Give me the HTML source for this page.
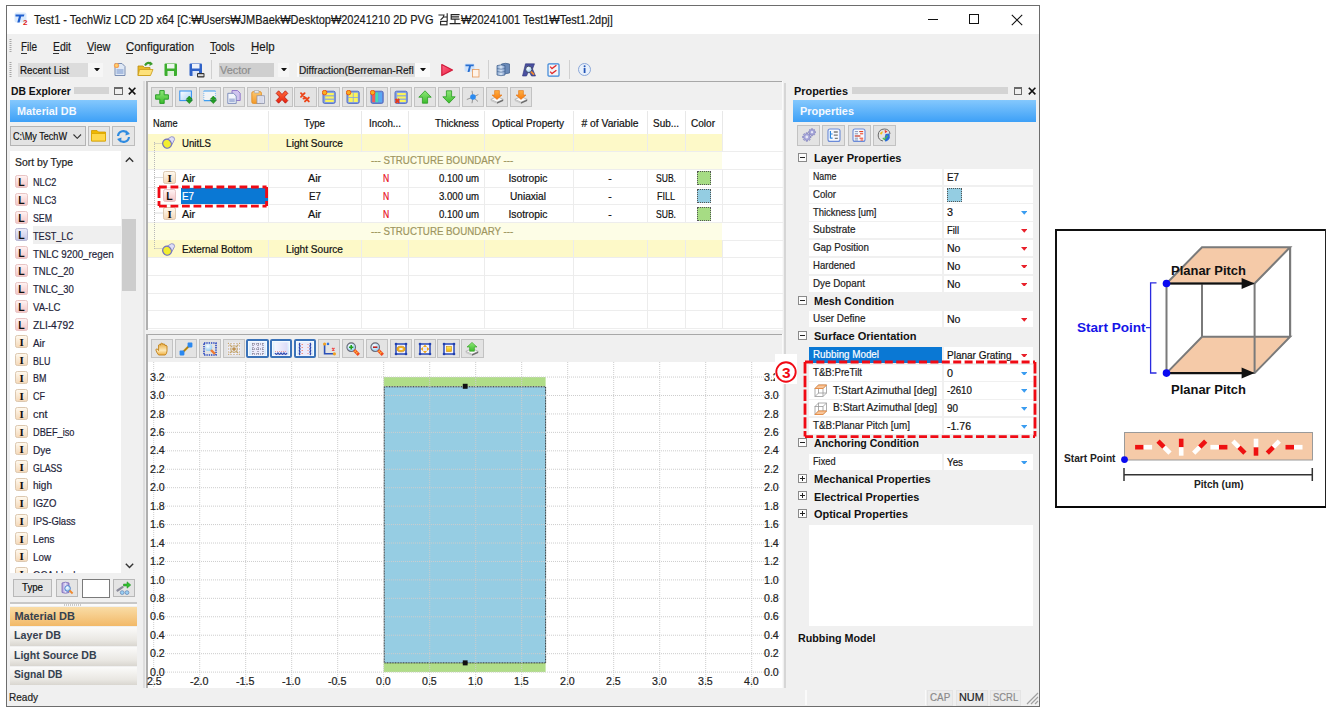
<!DOCTYPE html>
<html><head><meta charset="utf-8"><style>
html,body{margin:0;padding:0;width:1333px;height:711px;overflow:hidden;background:#fff;}
.a{position:absolute;display:block;}
.t{position:absolute;white-space:pre;line-height:1;transform-origin:0 0;}
.n{-webkit-text-stroke:0.2px currentColor;}

</style></head><body>
<svg width='0' height='0' style='position:absolute'><defs>
<linearGradient id='gL' x1='0' y1='0' x2='0' y2='1'><stop offset='0' stop-color='#fff4f4'/><stop offset='1' stop-color='#f4c4c4'/></linearGradient>
<linearGradient id='gLs' x1='0' y1='0' x2='0' y2='1'><stop offset='0' stop-color='#eeeefa'/><stop offset='1' stop-color='#c4c4e4'/></linearGradient>
<linearGradient id='gI' x1='0' y1='0' x2='0' y2='1'><stop offset='0' stop-color='#fffaf0'/><stop offset='1' stop-color='#f4d8b8'/></linearGradient>
<linearGradient id='gGreen' x1='0' y1='0' x2='0' y2='1'><stop offset='0' stop-color='#8ee878'/><stop offset='1' stop-color='#3cbc2c'/></linearGradient>
<linearGradient id='gBlueRect' x1='0' y1='0' x2='1' y2='1'><stop offset='0' stop-color='#ffffff'/><stop offset='1' stop-color='#a8d0f8'/></linearGradient>
<linearGradient id='gOrange' x1='0' y1='0' x2='0' y2='1'><stop offset='0' stop-color='#fcc870'/><stop offset='1' stop-color='#f49a2a'/></linearGradient>
<linearGradient id='gOrange2' x1='0' y1='0' x2='0' y2='1'><stop offset='0' stop-color='#ffb040'/><stop offset='1' stop-color='#f67a10'/></linearGradient>
<linearGradient id='gRed' x1='0' y1='0' x2='0' y2='1'><stop offset='0' stop-color='#ff6a3a'/><stop offset='1' stop-color='#e8200e'/></linearGradient>
<radialGradient id='gLens' cx='.4' cy='.35' r='.7'><stop offset='0' stop-color='#ffffff'/><stop offset='1' stop-color='#8cc8f0'/></radialGradient>
<linearGradient id='gHand' x1='0' y1='0' x2='0' y2='1'><stop offset='0' stop-color='#e8a838'/><stop offset='.6' stop-color='#fce8b8'/><stop offset='1' stop-color='#f0b040'/></linearGradient>
<linearGradient id='gLav' x1='0' y1='0' x2='1' y2='0'><stop offset='0' stop-color='#f6f6ff'/><stop offset='1' stop-color='#dcdcf8'/></linearGradient>
<linearGradient id='gYel' x1='0' y1='0' x2='0' y2='1'><stop offset='0' stop-color='#fff060'/><stop offset='1' stop-color='#f0b000'/></linearGradient>
<linearGradient id='gPlay' x1='0' y1='0' x2='1' y2='1'><stop offset='0' stop-color='#ff6a8a'/><stop offset='1' stop-color='#e81838'/></linearGradient>
<linearGradient id='gDB' x1='0' y1='0' x2='1' y2='0'><stop offset='0' stop-color='#8aa8d0'/><stop offset='.5' stop-color='#d8e6f6'/><stop offset='1' stop-color='#7a98c8'/></linearGradient>
<radialGradient id='gInfo' cx='.4' cy='.35' r='.7'><stop offset='0' stop-color='#ffffff'/><stop offset='1' stop-color='#dcdcf4'/></radialGradient>
<linearGradient id='gCyl' x1='0' y1='0' x2='1' y2='0'><stop offset='0' stop-color='#a898d8'/><stop offset='.5' stop-color='#e4e0f8'/><stop offset='1' stop-color='#9888c8'/></linearGradient>
</defs></svg>
<div class=a style="left:6px;top:5px;width:1034px;height:702px;background:#f0f0f0;box-sizing:border-box;border:1px solid #6d6d6d;"></div>
<div class=a style="left:7px;top:6px;width:1032px;height:28px;background:#ffffff;"></div>
<svg class=a style="left:14px;top:12px;" width=15 height=13 viewBox="0 0 15 13">
      <rect x='0.5' y='0.5' width='12' height='10' rx='2' fill='#cfe3fb' opacity='.8'/>
      <path d='M1.5 2.5 H10.5 L9.8 4.5 H7.2 L5.6 10.5 H3.3 L4.9 4.5 H1.5 Z' fill='#1f5fcf'/>
      <text x='9' y='12.8' font-family='Liberation Sans' font-weight='700' font-size='8' fill='#e02020'>2</text>
    </svg>
<span class='t n' style="left:33.60px;top:13.92px;font-family:'Liberation Sans',sans-serif;font-size:12.8px;font-weight:400;color:#1a1a1a;transform:scaleX(0.8579);">Test1 - TechWiz LCD 2D x64 [C:₩Users₩JMBaek₩Desktop₩20241210 2D PVG</span>
<svg class=a style="left:437px;top:12px;" width=26 height=14 viewBox="0 0 26 14">
      <g fill='none' stroke='#262626' stroke-width='1.15' stroke-linecap='square'>
       <path d='M2 3 H7 Q6.6 6 4 7.5'/>
       <path d='M10.2 1.8 V8.6 M6.8 5 H10.2'/>
       <rect x='3.6' y='9.4' width='6.4' height='3.4'/>
       <path d='M14.2 2.6 H22 M14.2 2.6 V7.1 H22 M14.2 4.9 H21.5 M18 7.1 V11 M13.2 11.6 H23'/>
      </g></svg>
<span class='t n' style="left:461.20px;top:13.92px;font-family:'Liberation Sans',sans-serif;font-size:12.8px;font-weight:400;color:#1a1a1a;transform:scaleX(0.8581);">₩20241001 Test1₩Test1.2dpj]</span>
<div class=a style="left:927.6px;top:19px;width:10.5px;height:1px;background:#111;"></div>
<div class=a style="left:969.4px;top:14.3px;width:10px;height:10px;box-sizing:border-box;border:1px solid #111;"></div>
<svg class=a style="left:1011px;top:13.5px;" width=12 height=12 viewBox="0 0 12 12"><path d='M0.8 0.8 L11.2 11.2 M11.2 0.8 L0.8 11.2' stroke='#111' stroke-width='1.1'/></svg>
<svg class=a style="left:9px;top:39px;" width=3 height=13 viewBox="0 0 3 13"><line x1='1.5' y1='0' x2='1.5' y2='13' stroke='#a8a8a8' stroke-width='2' stroke-dasharray='1 1'/></svg>
<span class='t n' style="left:21.00px;top:40.86px;font-family:'Liberation Sans',sans-serif;font-size:12.4px;font-weight:400;color:#1a1a1a;transform:scaleX(0.8013);">File</span>
<span class='t n' style="left:53.00px;top:40.86px;font-family:'Liberation Sans',sans-serif;font-size:12.4px;font-weight:400;color:#1a1a1a;transform:scaleX(0.8427);">Edit</span>
<span class='t n' style="left:86.60px;top:40.86px;font-family:'Liberation Sans',sans-serif;font-size:12.4px;font-weight:400;color:#1a1a1a;transform:scaleX(0.8784);">View</span>
<span class='t n' style="left:126.00px;top:40.86px;font-family:'Liberation Sans',sans-serif;font-size:12.4px;font-weight:400;color:#1a1a1a;transform:scaleX(0.9226);">Configuration</span>
<span class='t n' style="left:210.40px;top:40.86px;font-family:'Liberation Sans',sans-serif;font-size:12.4px;font-weight:400;color:#1a1a1a;transform:scaleX(0.8501);">Tools</span>
<span class='t n' style="left:251.00px;top:40.86px;font-family:'Liberation Sans',sans-serif;font-size:12.4px;font-weight:400;color:#1a1a1a;transform:scaleX(0.9261);">Help</span>
<div class=a style="left:21px;top:52.8px;width:6px;height:1px;background:#333;"></div>
<div class=a style="left:53px;top:52.8px;width:6px;height:1px;background:#333;"></div>
<div class=a style="left:86.6px;top:52.8px;width:7px;height:1px;background:#333;"></div>
<div class=a style="left:126px;top:52.8px;width:7px;height:1px;background:#333;"></div>
<div class=a style="left:210.4px;top:52.8px;width:6px;height:1px;background:#333;"></div>
<div class=a style="left:251px;top:52.8px;width:7px;height:1px;background:#333;"></div>
<svg class=a style="left:9px;top:62px;" width=3 height=15 viewBox="0 0 3 15"><line x1='1.5' y1='0' x2='1.5' y2='15' stroke='#a8a8a8' stroke-width='2' stroke-dasharray='1 1'/></svg>
<div class=a style="left:18px;top:62.6px;width:70px;height:14.4px;background:#dcdcdc;"></div>
<div class=a style="left:88px;top:62.6px;width:14.5px;height:14.4px;background:#f6f6f6;"></div>
<span class='t n' style="left:19.60px;top:64.85px;font-family:'Liberation Sans',sans-serif;font-size:11px;font-weight:400;color:#111;transform:scaleX(0.8904);">Recent List</span>
<svg class=a style="left:94.3px;top:67.75px;" width=6 height=3.5 viewBox="0 0 6 3.5"><path d='M0 0 H6 L3.0 3.5 Z' fill='#111'/></svg>
<svg class=a style="left:113px;top:62px;" width=14 height=15 viewBox="0 0 14 15">
      <path d='M2 1.5 H9 L12 4.5 V13.5 H2 Z' fill='#dfe8f5' stroke='#7b8fb3' stroke-width='1'/>
      <rect x='3.5' y='7' width='7' height='5' fill='#a9bde0'/>
      <circle cx='3.5' cy='3.5' r='2.6' fill='#f5a25a'/><circle cx='3.5' cy='3.5' r='1.4' fill='#ffd36b'/></svg>
<svg class=a style="left:137px;top:61px;" width=17 height=16 viewBox="0 0 17 16">
      <path d='M1 5 H6 L7.5 6.5 H13 V14.5 H1 Z' fill='#e9b928' stroke='#b98b10' stroke-width='.8'/>
      <path d='M2.5 8.5 H16 L13.5 14.5 H1 Z' fill='#fde17a' stroke='#c99a18' stroke-width='.8'/>
      <path d='M8 4.5 Q10 0.5 14 2.5' fill='none' stroke='#3a9b2a' stroke-width='2'/>
      <path d='M13 0.5 L16 3 L12.5 5 Z' fill='#3a9b2a'/></svg>
<svg class=a style="left:164px;top:62.5px;" width=14 height=14 viewBox="0 0 14 14">
      <rect x='0.5' y='0.5' width='12.5' height='12.5' fill='#3cae2e' rx='1'/>
      <rect x='3' y='1' width='7.5' height='4.5' fill='#eef6ee'/>
      <rect x='3.5' y='8' width='6.5' height='5' fill='#dff0dd'/></svg>
<svg class=a style="left:188.5px;top:62.5px;" width=16 height=15 viewBox="0 0 16 15">
      <rect x='0.5' y='0.5' width='12.5' height='12.5' fill='#2f62c8' rx='1'/>
      <rect x='3' y='1' width='7.5' height='4.5' fill='#eef2fa'/>
      <rect x='3.5' y='8' width='6.5' height='5' fill='#dde6f7'/>
      <rect x='8' y='10' width='7.5' height='4.5' fill='#333' rx='1'/><rect x='9' y='11.2' width='5.5' height='2' fill='#ddd'/></svg>
<div class=a style="left:211px;top:60px;width:1px;height:19px;background:#d0d0d0;"></div>
<div class=a style="left:218.8px;top:62.5px;width:55.5px;height:14.3px;background:#cfcfcf;"></div>
<span class='t n' style="left:220.00px;top:64.85px;font-family:'Liberation Sans',sans-serif;font-size:11px;font-weight:400;color:#8d8d8d;transform:scaleX(0.9940);">Vector</span>
<div class=a style="left:278.3px;top:62.5px;width:10.5px;height:14.3px;background:#f6f6f6;"></div>
<svg class=a style="left:280.5px;top:67.75px;" width=6 height=3.5 viewBox="0 0 6 3.5"><path d='M0 0 H6 L3.0 3.5 Z' fill='#111'/></svg>
<div class=a style="left:297px;top:62.5px;width:133px;height:14.5px;background:#fafafa;"></div>
<div class=a style="left:298.5px;top:63.3px;width:116.3px;height:13.5px;background:#dedede;"></div>
<span class='t n' style="left:299.30px;top:64.85px;font-family:'Liberation Sans',sans-serif;font-size:11px;font-weight:400;color:#1a1a1a;transform:scaleX(0.9212);">Diffraction(Berreman-Refl</span>
<svg class=a style="left:420.3px;top:67.75px;" width=6 height=3.5 viewBox="0 0 6 3.5"><path d='M0 0 H6 L3.0 3.5 Z' fill='#111'/></svg>
<svg class=a style="left:440px;top:62.5px;" width=14 height=14 viewBox="0 0 14 14"><path d='M1.8 1.5 L12.5 7 L1.8 12.5 Z' fill='url(#gPlay)' stroke='#d01838' stroke-width='1.2' stroke-linejoin='round'/></svg>
<svg class=a style="left:464px;top:62px;" width=16 height=16 viewBox="0 0 16 16">
      <rect x='0.5' y='1.5' width='10' height='8' rx='1.5' fill='#cde2fb'/>
      <path d='M1.5 2.5 H10 L9.5 4.3 H7 L5.5 10 H3.5 L5 4.3 H1.5 Z' fill='#2a6fd0'/>
      <rect x='8.5' y='7.5' width='6.5' height='7.5' fill='#fff3e8' stroke='#e59a5a' stroke-width='.8'/></svg>
<div class=a style="left:487.6px;top:60px;width:1px;height:19px;background:#d0d0d0;"></div>
<svg class=a style="left:495.5px;top:62px;" width=15 height=15 viewBox="0 0 15 15">
      <path d='M5.5 2 Q9.5 0.6 13.5 2 V11 Q9.5 12.4 5.5 11 Z' fill='#6a8ab8' stroke='#3a5a88' stroke-width='.7'/>
      <path d='M1 3.6 Q5 2.2 9 3.6 V13 Q5 14.4 1 13 Z' fill='url(#gDB)' stroke='#3a5a88' stroke-width='.7'/>
      <path d='M1 6.5 Q5 7.9 9 6.5 M1 9.5 Q5 10.9 9 9.5' fill='none' stroke='#4a6a98' stroke-width='.7'/></svg>
<svg class=a style="left:521.5px;top:62.5px;" width=14 height=14 viewBox="0 0 14 14">
      <path d='M0.5 13 L3.5 0.8 H12.5 L10.5 6 L13.5 13 H9.5 L6.8 8 L4.5 13 Z' fill='#4a50a0' stroke='#2a3078' stroke-width='.6'/>
      <circle cx='6.8' cy='6.3' r='3.2' fill='url(#gLens)' stroke='#3a3a58' stroke-width='.9'/>
      <path d='M9 8.6 L12 11.6' stroke='#f08a30' stroke-width='2'/></svg>
<svg class=a style="left:547px;top:62.5px;" width=13 height=14 viewBox="0 0 13 14">
      <rect x='1' y='0.8' width='11' height='12.4' rx='1' fill='#f4f4f8' stroke='#3a86d8' stroke-width='1.2'/>
      <path d='M3.2 3.6 L5 5.6 L9.4 2.2 M3.2 8.6 L5 10.6 L9.4 7.2' fill='none' stroke='#e02a2a' stroke-width='1.3'/></svg>
<div class=a style="left:569px;top:60px;width:1px;height:19px;background:#d0d0d0;"></div>
<svg class=a style="left:577px;top:62.5px;" width=15 height=14 viewBox="0 0 15 14">
      <circle cx='7.5' cy='6.5' r='6' fill='#e8f0fb' stroke='#8aa7d8' stroke-width='1'/>
      <rect x='6.7' y='5' width='1.8' height='5' fill='#2456b8'/><circle cx='7.6' cy='3.2' r='1' fill='#2456b8'/></svg>
<span class='t' style="left:10.60px;top:85.65px;font-family:'Liberation Sans',sans-serif;font-size:11px;font-weight:700;color:#111;transform:scaleX(0.9406);">DB Explorer</span>
<div class=a style="left:74px;top:87px;width:34.5px;height:6.6px;background:#d4d4d4;"></div>
<div class=a style="left:114px;top:86.5px;width:8.8px;height:8.2px;box-sizing:border-box;border:1px solid #6a6a6a;"></div>
<div class=a style="left:115px;top:87.5px;width:6.8px;height:1px;background:#6a6a6a;"></div>
<svg class=a style="left:128px;top:86.5px;" width=8.2 height=8.2 viewBox="0 0 8.2 8.2"><path d='M0.8 0.8 L7.4 7.4 M7.4 0.8 L0.8 7.4' stroke='#111' stroke-width='1.6'/></svg>
<div class=a style="left:10px;top:100.3px;width:127px;height:21.5px;background:linear-gradient(#84c8fd,#3da0f7);"></div>
<span class='t' style="left:16.50px;top:106.05px;font-family:'Liberation Sans',sans-serif;font-size:11px;font-weight:700;color:#f4f9ff;transform:scaleX(0.9830);">Material DB</span>
<div class=a style="left:10px;top:126px;width:75.5px;height:20px;background:#e3e3e3;box-sizing:border-box;border:1px solid #b4b4b4;"></div>
<span class='t n' style="left:13.30px;top:130.85px;font-family:'Liberation Sans',sans-serif;font-size:11px;font-weight:400;color:#111;transform:scaleX(0.8282);">C:\My TechW</span>
<svg class=a style="left:73px;top:134px;" width=8.5 height=5 viewBox="0 0 8.5 5"><path d='M0.5 0.5 L4.25 4.3 L8 0.5' fill='none' stroke='#333' stroke-width='1.1'/></svg>
<div class=a style="left:87.5px;top:126px;width:22.2px;height:20px;background:#e6e6e6;box-sizing:border-box;border:1px solid #bdbdbd;"></div>
<svg class=a style="left:90.5px;top:129px;" width=16 height=13 viewBox="0 0 16 13">
      <path d='M0.5 1.5 H6 L7.5 3 H14.5 V12 H0.5 Z' fill='#f0b800' stroke='#d09a00' stroke-width='.8'/>
      <path d='M0.5 4.5 H14.5 V12 H0.5 Z' fill='#ffd84a' stroke='#d8a400' stroke-width='.8'/></svg>
<div class=a style="left:112.3px;top:126px;width:22.5px;height:20px;background:#e6e6e6;box-sizing:border-box;border:1px solid #bdbdbd;"></div>
<svg class=a style="left:116px;top:128.5px;" width=15 height=15 viewBox="0 0 15 15">
      <path d='M2 7 A5.5 5.5 0 0 1 12 4.5' fill='none' stroke='#2f8be0' stroke-width='2.2'/>
      <path d='M13 8 A5.5 5.5 0 0 1 3 10.5' fill='none' stroke='#2f8be0' stroke-width='2.2'/>
      <path d='M10 1.5 L14 5 L9.5 6.5 Z' fill='#2f8be0'/><path d='M5 13.5 L1 10 L5.5 8.5 Z' fill='#2f8be0'/></svg>
<div class=a style="left:10px;top:151px;width:111px;height:422px;background:#ffffff;"></div>
<div class=a style="left:121px;top:151px;width:16px;height:422px;background:#f0f0f0;"></div>
<div class=a style="left:122px;top:219px;width:14px;height:72px;background:#cdcdcd;"></div>
<svg class=a style="left:124.5px;top:157.2px;" width=9 height=5.5 viewBox="0 0 9 5.5"><path d='M0.8 4.8 L4.5 1 L8.2 4.8' fill='none' stroke='#333' stroke-width='1.4'/></svg>
<svg class=a style="left:124.5px;top:563.2px;" width=9 height=5.5 viewBox="0 0 9 5.5"><path d='M0.8 0.8 L4.5 4.6 L8.2 0.8' fill='none' stroke='#333' stroke-width='1.4'/></svg>
<span class='t n' style="left:14.60px;top:157.19px;font-family:'Liberation Sans',sans-serif;font-size:10.6px;font-weight:400;color:#222;transform:scaleX(0.9784);">Sort by Type</span>
<svg class=a style="left:15.2px;top:175.0px;" width=13 height=13 viewBox="0 0 13 13"><rect x='0.5' y='0.5' width='12' height='12' rx='1.8' fill='url(#gL)' stroke='#e8c4c4' stroke-width='1'/><text x='6.5' y='10.5' text-anchor='middle' font-family='Liberation Sans' font-weight='700' font-size='10.5' fill='#111'>L</text></svg>
<span class='t n' style="left:33.20px;top:177.29px;font-family:'Liberation Sans',sans-serif;font-size:10.6px;font-weight:400;color:#1f1f3a;transform:scaleX(0.8600);">NLC2</span>
<svg class=a style="left:15.2px;top:192.82999999999998px;" width=13 height=13 viewBox="0 0 13 13"><rect x='0.5' y='0.5' width='12' height='12' rx='1.8' fill='url(#gL)' stroke='#e8c4c4' stroke-width='1'/><text x='6.5' y='10.5' text-anchor='middle' font-family='Liberation Sans' font-weight='700' font-size='10.5' fill='#111'>L</text></svg>
<span class='t n' style="left:33.20px;top:195.12px;font-family:'Liberation Sans',sans-serif;font-size:10.6px;font-weight:400;color:#1f1f3a;transform:scaleX(0.8600);">NLC3</span>
<svg class=a style="left:15.2px;top:210.66px;" width=13 height=13 viewBox="0 0 13 13"><rect x='0.5' y='0.5' width='12' height='12' rx='1.8' fill='url(#gL)' stroke='#e8c4c4' stroke-width='1'/><text x='6.5' y='10.5' text-anchor='middle' font-family='Liberation Sans' font-weight='700' font-size='10.5' fill='#111'>L</text></svg>
<span class='t n' style="left:33.20px;top:212.95px;font-family:'Liberation Sans',sans-serif;font-size:10.6px;font-weight:400;color:#1f1f3a;transform:scaleX(0.8272);">SEM</span>
<div class=a style="left:32.7px;top:226.39000000000001px;width:88px;height:17.4px;background:#efefef;"></div>
<svg class=a style="left:15.2px;top:228.49px;" width=13 height=13 viewBox="0 0 13 13"><rect x='0.5' y='0.5' width='12' height='12' rx='1.8' fill='url(#gLs)' stroke='#b8b8d4' stroke-width='1'/><text x='6.5' y='10.5' text-anchor='middle' font-family='Liberation Sans' font-weight='700' font-size='10.5' fill='#111'>L</text></svg>
<span class='t n' style="left:33.20px;top:230.78px;font-family:'Liberation Sans',sans-serif;font-size:10.6px;font-weight:400;color:#1f1f3a;transform:scaleX(0.8599);">TEST_LC</span>
<svg class=a style="left:15.2px;top:246.32px;" width=13 height=13 viewBox="0 0 13 13"><rect x='0.5' y='0.5' width='12' height='12' rx='1.8' fill='url(#gL)' stroke='#e8c4c4' stroke-width='1'/><text x='6.5' y='10.5' text-anchor='middle' font-family='Liberation Sans' font-weight='700' font-size='10.5' fill='#111'>L</text></svg>
<span class='t n' style="left:33.20px;top:248.61px;font-family:'Liberation Sans',sans-serif;font-size:10.6px;font-weight:400;color:#1f1f3a;transform:scaleX(0.9246);">TNLC 9200_regen</span>
<svg class=a style="left:15.2px;top:264.15px;" width=13 height=13 viewBox="0 0 13 13"><rect x='0.5' y='0.5' width='12' height='12' rx='1.8' fill='url(#gL)' stroke='#e8c4c4' stroke-width='1'/><text x='6.5' y='10.5' text-anchor='middle' font-family='Liberation Sans' font-weight='700' font-size='10.5' fill='#111'>L</text></svg>
<span class='t n' style="left:33.20px;top:266.44px;font-family:'Liberation Sans',sans-serif;font-size:10.6px;font-weight:400;color:#1f1f3a;transform:scaleX(0.8998);">TNLC_20</span>
<svg class=a style="left:15.2px;top:281.98px;" width=13 height=13 viewBox="0 0 13 13"><rect x='0.5' y='0.5' width='12' height='12' rx='1.8' fill='url(#gL)' stroke='#e8c4c4' stroke-width='1'/><text x='6.5' y='10.5' text-anchor='middle' font-family='Liberation Sans' font-weight='700' font-size='10.5' fill='#111'>L</text></svg>
<span class='t n' style="left:33.20px;top:284.27px;font-family:'Liberation Sans',sans-serif;font-size:10.6px;font-weight:400;color:#1f1f3a;transform:scaleX(0.8998);">TNLC_30</span>
<svg class=a style="left:15.2px;top:299.81px;" width=13 height=13 viewBox="0 0 13 13"><rect x='0.5' y='0.5' width='12' height='12' rx='1.8' fill='url(#gL)' stroke='#e8c4c4' stroke-width='1'/><text x='6.5' y='10.5' text-anchor='middle' font-family='Liberation Sans' font-weight='700' font-size='10.5' fill='#111'>L</text></svg>
<span class='t n' style="left:33.20px;top:302.10px;font-family:'Liberation Sans',sans-serif;font-size:10.6px;font-weight:400;color:#1f1f3a;transform:scaleX(0.9040);">VA-LC</span>
<svg class=a style="left:15.2px;top:317.64px;" width=13 height=13 viewBox="0 0 13 13"><rect x='0.5' y='0.5' width='12' height='12' rx='1.8' fill='url(#gL)' stroke='#e8c4c4' stroke-width='1'/><text x='6.5' y='10.5' text-anchor='middle' font-family='Liberation Sans' font-weight='700' font-size='10.5' fill='#111'>L</text></svg>
<span class='t n' style="left:33.20px;top:319.93px;font-family:'Liberation Sans',sans-serif;font-size:10.6px;font-weight:400;color:#1f1f3a;transform:scaleX(0.9621);">ZLI-4792</span>
<svg class=a style="left:15.2px;top:335.46999999999997px;" width=13 height=13 viewBox="0 0 13 13"><rect x='0.5' y='0.5' width='12' height='12' rx='1.8' fill='url(#gI)' stroke='#dcc8b0' stroke-width='1'/><text x='6.6' y='10.8' text-anchor='middle' font-family='Liberation Serif' font-weight='700' font-size='11' fill='#111'>I</text></svg>
<span class='t n' style="left:33.20px;top:337.76px;font-family:'Liberation Sans',sans-serif;font-size:10.6px;font-weight:400;color:#1f1f3a;transform:scaleX(0.9264);">Air</span>
<svg class=a style="left:15.2px;top:353.29999999999995px;" width=13 height=13 viewBox="0 0 13 13"><rect x='0.5' y='0.5' width='12' height='12' rx='1.8' fill='url(#gI)' stroke='#dcc8b0' stroke-width='1'/><text x='6.6' y='10.8' text-anchor='middle' font-family='Liberation Serif' font-weight='700' font-size='11' fill='#111'>I</text></svg>
<span class='t n' style="left:33.20px;top:355.59px;font-family:'Liberation Sans',sans-serif;font-size:10.6px;font-weight:400;color:#1f1f3a;transform:scaleX(0.8394);">BLU</span>
<svg class=a style="left:15.2px;top:371.13px;" width=13 height=13 viewBox="0 0 13 13"><rect x='0.5' y='0.5' width='12' height='12' rx='1.8' fill='url(#gI)' stroke='#dcc8b0' stroke-width='1'/><text x='6.6' y='10.8' text-anchor='middle' font-family='Liberation Serif' font-weight='700' font-size='11' fill='#111'>I</text></svg>
<span class='t n' style="left:33.20px;top:373.42px;font-family:'Liberation Sans',sans-serif;font-size:10.6px;font-weight:400;color:#1f1f3a;transform:scaleX(0.8433);">BM</span>
<svg class=a style="left:15.2px;top:388.96px;" width=13 height=13 viewBox="0 0 13 13"><rect x='0.5' y='0.5' width='12' height='12' rx='1.8' fill='url(#gI)' stroke='#dcc8b0' stroke-width='1'/><text x='6.6' y='10.8' text-anchor='middle' font-family='Liberation Serif' font-weight='700' font-size='11' fill='#111'>I</text></svg>
<span class='t n' style="left:33.20px;top:391.25px;font-family:'Liberation Sans',sans-serif;font-size:10.6px;font-weight:400;color:#1f1f3a;transform:scaleX(0.8496);">CF</span>
<svg class=a style="left:15.2px;top:406.78999999999996px;" width=13 height=13 viewBox="0 0 13 13"><rect x='0.5' y='0.5' width='12' height='12' rx='1.8' fill='url(#gI)' stroke='#dcc8b0' stroke-width='1'/><text x='6.6' y='10.8' text-anchor='middle' font-family='Liberation Serif' font-weight='700' font-size='11' fill='#111'>I</text></svg>
<span class='t n' style="left:33.20px;top:409.08px;font-family:'Liberation Sans',sans-serif;font-size:10.6px;font-weight:400;color:#1f1f3a;transform:scaleX(1.0254);">cnt</span>
<svg class=a style="left:15.2px;top:424.62px;" width=13 height=13 viewBox="0 0 13 13"><rect x='0.5' y='0.5' width='12' height='12' rx='1.8' fill='url(#gI)' stroke='#dcc8b0' stroke-width='1'/><text x='6.6' y='10.8' text-anchor='middle' font-family='Liberation Serif' font-weight='700' font-size='11' fill='#111'>I</text></svg>
<span class='t n' style="left:33.20px;top:426.91px;font-family:'Liberation Sans',sans-serif;font-size:10.6px;font-weight:400;color:#1f1f3a;transform:scaleX(0.8702);">DBEF_iso</span>
<svg class=a style="left:15.2px;top:442.45px;" width=13 height=13 viewBox="0 0 13 13"><rect x='0.5' y='0.5' width='12' height='12' rx='1.8' fill='url(#gI)' stroke='#dcc8b0' stroke-width='1'/><text x='6.6' y='10.8' text-anchor='middle' font-family='Liberation Serif' font-weight='700' font-size='11' fill='#111'>I</text></svg>
<span class='t n' style="left:33.20px;top:444.74px;font-family:'Liberation Sans',sans-serif;font-size:10.6px;font-weight:400;color:#1f1f3a;transform:scaleX(0.9552);">Dye</span>
<svg class=a style="left:15.2px;top:460.28px;" width=13 height=13 viewBox="0 0 13 13"><rect x='0.5' y='0.5' width='12' height='12' rx='1.8' fill='url(#gI)' stroke='#dcc8b0' stroke-width='1'/><text x='6.6' y='10.8' text-anchor='middle' font-family='Liberation Serif' font-weight='700' font-size='11' fill='#111'>I</text></svg>
<span class='t n' style="left:33.20px;top:462.57px;font-family:'Liberation Sans',sans-serif;font-size:10.6px;font-weight:400;color:#1f1f3a;transform:scaleX(0.8262);">GLASS</span>
<svg class=a style="left:15.2px;top:478.10999999999996px;" width=13 height=13 viewBox="0 0 13 13"><rect x='0.5' y='0.5' width='12' height='12' rx='1.8' fill='url(#gI)' stroke='#dcc8b0' stroke-width='1'/><text x='6.6' y='10.8' text-anchor='middle' font-family='Liberation Serif' font-weight='700' font-size='11' fill='#111'>I</text></svg>
<span class='t n' style="left:33.20px;top:480.40px;font-family:'Liberation Sans',sans-serif;font-size:10.6px;font-weight:400;color:#1f1f3a;transform:scaleX(0.9485);">high</span>
<svg class=a style="left:15.2px;top:495.93999999999994px;" width=13 height=13 viewBox="0 0 13 13"><rect x='0.5' y='0.5' width='12' height='12' rx='1.8' fill='url(#gI)' stroke='#dcc8b0' stroke-width='1'/><text x='6.6' y='10.8' text-anchor='middle' font-family='Liberation Serif' font-weight='700' font-size='11' fill='#111'>I</text></svg>
<span class='t n' style="left:33.20px;top:498.23px;font-family:'Liberation Sans',sans-serif;font-size:10.6px;font-weight:400;color:#1f1f3a;transform:scaleX(0.8994);">IGZO</span>
<svg class=a style="left:15.2px;top:513.77px;" width=13 height=13 viewBox="0 0 13 13"><rect x='0.5' y='0.5' width='12' height='12' rx='1.8' fill='url(#gI)' stroke='#dcc8b0' stroke-width='1'/><text x='6.6' y='10.8' text-anchor='middle' font-family='Liberation Serif' font-weight='700' font-size='11' fill='#111'>I</text></svg>
<span class='t n' style="left:33.20px;top:516.06px;font-family:'Liberation Sans',sans-serif;font-size:10.6px;font-weight:400;color:#1f1f3a;transform:scaleX(0.8933);">IPS-Glass</span>
<svg class=a style="left:15.2px;top:531.5999999999999px;" width=13 height=13 viewBox="0 0 13 13"><rect x='0.5' y='0.5' width='12' height='12' rx='1.8' fill='url(#gI)' stroke='#dcc8b0' stroke-width='1'/><text x='6.6' y='10.8' text-anchor='middle' font-family='Liberation Serif' font-weight='700' font-size='11' fill='#111'>I</text></svg>
<span class='t n' style="left:33.20px;top:533.89px;font-family:'Liberation Sans',sans-serif;font-size:10.6px;font-weight:400;color:#1f1f3a;transform:scaleX(0.9354);">Lens</span>
<svg class=a style="left:15.2px;top:549.43px;" width=13 height=13 viewBox="0 0 13 13"><rect x='0.5' y='0.5' width='12' height='12' rx='1.8' fill='url(#gI)' stroke='#dcc8b0' stroke-width='1'/><text x='6.6' y='10.8' text-anchor='middle' font-family='Liberation Serif' font-weight='700' font-size='11' fill='#111'>I</text></svg>
<span class='t n' style="left:33.20px;top:551.72px;font-family:'Liberation Sans',sans-serif;font-size:10.6px;font-weight:400;color:#1f1f3a;transform:scaleX(0.9260);">Low</span>
<svg class=a style="left:15.2px;top:567.26px;" width=13 height=13 viewBox="0 0 13 13"><rect x='0.5' y='0.5' width='12' height='12' rx='1.8' fill='url(#gI)' stroke='#dcc8b0' stroke-width='1'/><text x='6.6' y='10.8' text-anchor='middle' font-family='Liberation Serif' font-weight='700' font-size='11' fill='#111'>I</text></svg>
<span class='t n' style="left:33.20px;top:569.55px;font-family:'Liberation Sans',sans-serif;font-size:10.6px;font-weight:400;color:#1f1f3a;transform:scaleX(0.8992);">OCA black</span>
<div class=a style="left:7px;top:573px;width:139px;height:30px;background:#f0f0f0;"></div>
<div class=a style="left:12.5px;top:579px;width:39.5px;height:17.5px;background:#e4e4e4;box-sizing:border-box;border:1px solid #b8b8b8;"></div>
<span class='t n' style="left:21.70px;top:582.49px;font-family:'Liberation Sans',sans-serif;font-size:10.6px;font-weight:400;color:#111;transform:scaleX(0.9143);">Type</span>
<div class=a style="left:55.6px;top:579px;width:22.2px;height:17.5px;background:#e4e4e4;box-sizing:border-box;border:1px solid #b8b8b8;"></div>
<svg class=a style="left:59.5px;top:581px;" width=14 height=14 viewBox="0 0 14 14">
      <path d='M2 2 Q5.5 0.4 9 2 V11.5 Q5.5 13 2 11.5 Z' fill='url(#gCyl)' stroke='#7a6ab8' stroke-width='.8'/>
      <circle cx='7.6' cy='7.4' r='2.8' fill='url(#gLens)' stroke='#4a78c8' stroke-width='.9'/><path d='M9.6 9.6 L12.6 12.4' stroke='#f08a30' stroke-width='2'/></svg>
<div class=a style="left:82px;top:578.5px;width:28.4px;height:19.5px;background:#ffffff;box-sizing:border-box;border:1px solid #7a7a7a;"></div>
<div class=a style="left:112.7px;top:579px;width:22.3px;height:17.5px;background:#e4e4e4;box-sizing:border-box;border:1px solid #b8b8b8;"></div>
<svg class=a style="left:116px;top:580.5px;" width=16 height=15 viewBox="0 0 16 15">
      <path d='M1.5 9.5 L6.5 6.2' stroke='#8a8a9a' stroke-width='2.2' stroke-linecap='round'/>
      <circle cx='6.2' cy='11.6' r='1.9' fill='#9ad0f4' stroke='#6a8ab8' stroke-width='.8'/><circle cx='11' cy='11.6' r='1.9' fill='#9ad0f4' stroke='#6a8ab8' stroke-width='.8'/>
      <path d='M7.5 3 H11 V0.8 L14.8 4 L11 7.2 V5 H7.5 Z' fill='#30c030' stroke='#208a20' stroke-width='.5'/></svg>
<div class=a style="left:10px;top:602px;width:127px;height:1.6px;background:#c8c8c8;"></div>
<div class=a style="left:10px;top:603.8px;width:127px;height:2.6px;background:#fbfbfb;"></div>
<svg class=a style="left:64px;top:604.1px;" width=18 height=2 viewBox="0 0 18 2"><line x1='0' y1='1' x2='18' y2='1' stroke='#9a9a9a' stroke-width='1.2' stroke-dasharray='1 1'/></svg>
<div class=a style="left:9.7px;top:607px;width:127.3px;height:19.2px;background:linear-gradient(#f9dca6,#f2b968);"></div>
<div class=a style="left:9.7px;top:627.3px;width:127.3px;height:19.200000000000045px;background:linear-gradient(#fbfbfa,#e9e7e2 70%,#d9d6d0);"></div>
<div class=a style="left:9.7px;top:647.3px;width:127.3px;height:18.300000000000068px;background:linear-gradient(#fbfbfa,#e9e7e2 70%,#d9d6d0);"></div>
<div class=a style="left:9.7px;top:667px;width:127.3px;height:18px;background:linear-gradient(#fbfbfa,#e9e7e2 70%,#d9d6d0);"></div>
<span class='t' style="left:14.40px;top:610.85px;font-family:'Liberation Sans',sans-serif;font-size:11px;font-weight:700;color:#35414f;">Material DB</span>
<span class='t' style="left:14.40px;top:630.35px;font-family:'Liberation Sans',sans-serif;font-size:11px;font-weight:700;color:#35414f;transform:scaleX(0.9731);">Layer DB</span>
<span class='t' style="left:14.40px;top:649.75px;font-family:'Liberation Sans',sans-serif;font-size:11px;font-weight:700;color:#35414f;transform:scaleX(0.9574);">Light Source DB</span>
<span class='t' style="left:14.40px;top:669.25px;font-family:'Liberation Sans',sans-serif;font-size:11px;font-weight:700;color:#35414f;transform:scaleX(0.9335);">Signal DB</span>
<div class=a style="left:142.5px;top:81px;width:2px;height:607px;background:#dedede;"></div>
<div class=a style="left:146px;top:81px;width:637px;height:249px;background:#ffffff;"></div>
<div class=a style="left:146px;top:81px;width:637px;height:1.3px;background:#a8a8a8;"></div>
<div class=a style="left:146px;top:81px;width:1.6px;height:249px;background:#b0b0b0;"></div>
<div class=a style="left:147.8px;top:82.3px;width:635px;height:28px;background:#f0f0f0;"></div>
<div class=a style="left:781.5px;top:81px;width:1.8px;height:249px;background:#fafafa;"></div>
<div class=a style="left:150.8px;top:87.3px;width:22.2px;height:19.5px;background:#e3e3e3;box-sizing:border-box;border:1px solid #c2c2c2;"></div>
<svg class=a style="left:154.9px;top:90.05px;" width=14 height=14 viewBox="0 0 14 14"><path d='M4.8 0.6 H9.2 V4.8 H13.4 V9.2 H9.2 V13.4 H4.8 V9.2 H0.6 V4.8 H4.8 Z' fill='url(#gGreen)' stroke='#1f961f' stroke-width='.9'/></svg>
<div class=a style="left:174.73000000000002px;top:87.3px;width:22.2px;height:19.5px;background:#e3e3e3;box-sizing:border-box;border:1px solid #c2c2c2;"></div>
<svg class=a style="left:178.83px;top:90.05px;" width=14 height=14 viewBox="0 0 14 14"><rect x='0.8' y='1' width='11.6' height='9.6' fill='url(#gBlueRect)' stroke='#2f8ef0' stroke-width='1'/><path d='M10.3 6 L13.4 9.3 H11.3 V10.3 H13.4 L10.3 13.6 L7.2 10.3 H9.3 V9.3 H7.2 Z' fill='#22a022' stroke='#107010' stroke-width='.5'/></svg>
<div class=a style="left:198.66000000000003px;top:87.3px;width:22.2px;height:19.5px;background:#e3e3e3;box-sizing:border-box;border:1px solid #c2c2c2;"></div>
<svg class=a style="left:202.76000000000002px;top:90.05px;" width=14 height=14 viewBox="0 0 14 14"><rect x='0.8' y='1' width='11.6' height='9.6' fill='#f2f4f6'/><path d='M0.8 1 H12.4 M0.8 10.6 H12.4' stroke='#3f9ef0' stroke-width='1.1'/><path d='M0.8 1 V10.6 M12.4 1 V10.6' stroke='#7fbef5' stroke-width='1' stroke-dasharray='1 1'/><path d='M10.3 6 L13.4 9.3 H11.3 V10.3 H13.4 L10.3 13.6 L7.2 10.3 H9.3 V9.3 H7.2 Z' fill='#22a022' stroke='#107010' stroke-width='.5'/></svg>
<div class=a style="left:222.59px;top:87.3px;width:22.2px;height:19.5px;background:#e3e3e3;box-sizing:border-box;border:1px solid #c2c2c2;"></div>
<svg class=a style="left:226.69px;top:90.05px;" width=14 height=14 viewBox="0 0 14 14"><path d='M5 0.5 H10.5 L13.2 3.2 V10.5 H5 Z' fill='#cfc4ee' stroke='#8c72c8' stroke-width='.9'/><path d='M0.8 3.3 H6.5 L9.2 6 V13.4 H0.8 Z' fill='#f2f5fb' stroke='#7486b8' stroke-width='.9'/><rect x='2.2' y='8.5' width='5.6' height='3.6' fill='#aab8dc'/></svg>
<div class=a style="left:246.52px;top:87.3px;width:22.2px;height:19.5px;background:#e3e3e3;box-sizing:border-box;border:1px solid #c2c2c2;"></div>
<svg class=a style="left:250.62px;top:90.05px;" width=14 height=14 viewBox="0 0 14 14"><rect x='0.8' y='1.6' width='9.6' height='11.8' rx='1.5' fill='url(#gOrange)' stroke='#e08a20' stroke-width='.8'/><rect x='3.3' y='0.4' width='4.6' height='2.6' rx='.6' fill='#e8e8e8' stroke='#9a9a9a' stroke-width='.6'/><rect x='6' y='5.8' width='7.3' height='7.6' fill='#eceef8' stroke='#8a90a8' stroke-width='.8'/><path d='M7.5 8 H12 M7.5 10 H12 M7.5 12 H12' stroke='#b4b8d4' stroke-width='.7'/></svg>
<div class=a style="left:270.45000000000005px;top:87.3px;width:22.2px;height:19.5px;background:#e3e3e3;box-sizing:border-box;border:1px solid #c2c2c2;"></div>
<svg class=a style="left:274.55000000000007px;top:90.05px;" width=14 height=14 viewBox="0 0 14 14"><path d='M1.2 3.4 L3.6 0.8 L7 4.4 L10.4 0.8 L12.8 3.4 L9.4 7 L12.8 10.6 L10.4 13.2 L7 9.6 L3.6 13.2 L1.2 10.6 L4.6 7 Z' fill='url(#gRed)' stroke='#b8140c' stroke-width='.8'/></svg>
<div class=a style="left:294.38px;top:87.3px;width:22.2px;height:19.5px;background:#e3e3e3;box-sizing:border-box;border:1px solid #c2c2c2;"></div>
<svg class=a style="left:298.48px;top:90.05px;" width=14 height=14 viewBox="0 0 14 14"><path d='M3 3.2 L6.6 6.8 M6.6 3.2 L3 6.8 M7 7.6 L10.8 11.4 M10.8 7.6 L7 11.4 M5.5 8.5 L8 8' stroke='#ec4418' stroke-width='1.9' stroke-linecap='round'/></svg>
<div class=a style="left:318.31px;top:87.3px;width:22.2px;height:19.5px;background:#e3e3e3;box-sizing:border-box;border:1px solid #c2c2c2;"></div>
<svg class=a style="left:322.41px;top:90.05px;" width=14 height=14 viewBox="0 0 14 14"><rect x='1' y='1.2' width='12.2' height='12.2' rx='1.6' fill='#8aa4e0' stroke='#4a66c0' stroke-width='.9'/><rect x='3.2' y='3' width='8.6' height='2.2' fill='#fbf45a'/><rect x='3.2' y='6.4' width='8.6' height='2.2' fill='#fbf45a'/><rect x='3.2' y='9.8' width='8.6' height='2.2' fill='#fbf45a'/><circle cx='2.6' cy='2.6' r='2.3' fill='#f7b020' stroke='#ee5010' stroke-width='.9'/></svg>
<div class=a style="left:342.24px;top:87.3px;width:22.2px;height:19.5px;background:#e3e3e3;box-sizing:border-box;border:1px solid #c2c2c2;"></div>
<svg class=a style="left:346.34000000000003px;top:90.05px;" width=14 height=14 viewBox="0 0 14 14"><rect x='1' y='1.2' width='12.2' height='12.2' rx='1.6' fill='#8aa4e0' stroke='#4a66c0' stroke-width='.9'/><rect x='2.6' y='2.8' width='4.2' height='4.2' fill='#fbf45a'/><rect x='7.6' y='2.8' width='4.2' height='4.2' fill='#fbf45a'/><rect x='2.6' y='7.8' width='4.2' height='4.2' fill='#fbf45a'/><rect x='7.6' y='7.8' width='4.2' height='4.2' fill='#fbf45a'/><circle cx='2.6' cy='2.6' r='2.3' fill='#f7b020' stroke='#ee5010' stroke-width='.9'/></svg>
<div class=a style="left:366.17px;top:87.3px;width:22.2px;height:19.5px;background:#e3e3e3;box-sizing:border-box;border:1px solid #c2c2c2;"></div>
<svg class=a style="left:370.27000000000004px;top:90.05px;" width=14 height=14 viewBox="0 0 14 14"><rect x='1' y='1.2' width='12.2' height='12.2' rx='1.6' fill='#6a8ad8' stroke='#4a66c0' stroke-width='.9'/><rect x='2.2' y='2.4' width='3' height='9.8' fill='#f25a5a'/><rect x='5.4' y='2.4' width='3' height='9.8' fill='#44dcb4'/><rect x='8.6' y='2.4' width='3.4' height='9.8' fill='#58a8f4'/><circle cx='2.6' cy='2.6' r='2.3' fill='#f7b020' stroke='#ee5010' stroke-width='.9'/></svg>
<div class=a style="left:390.1px;top:87.3px;width:22.2px;height:19.5px;background:#e3e3e3;box-sizing:border-box;border:1px solid #c2c2c2;"></div>
<svg class=a style="left:394.20000000000005px;top:90.05px;" width=14 height=14 viewBox="0 0 14 14"><rect x='1' y='1.2' width='12.2' height='12.2' rx='1.6' fill='#8aa4e0' stroke='#4a66c0' stroke-width='.9'/><rect x='3.2' y='3' width='8.6' height='2.2' fill='#fbf45a'/><rect x='3.2' y='6.4' width='8.6' height='2.2' fill='#fbf45a'/><rect x='6' y='9.8' width='5.8' height='2.2' fill='#fbf45a'/><path d='M1.5 9 L5.2 12.8 M5.2 9 L1.5 12.8' stroke='#e83a18' stroke-width='1.9'/></svg>
<div class=a style="left:414.03000000000003px;top:87.3px;width:22.2px;height:19.5px;background:#e3e3e3;box-sizing:border-box;border:1px solid #c2c2c2;"></div>
<svg class=a style="left:418.13000000000005px;top:90.05px;" width=14 height=14 viewBox="0 0 14 14"><path d='M7 0.8 L13.2 7.2 H9.6 V13.2 H4.4 V7.2 H0.8 Z' fill='url(#gGreen)' stroke='#2a9a22' stroke-width='.8'/></svg>
<div class=a style="left:437.96px;top:87.3px;width:22.2px;height:19.5px;background:#e3e3e3;box-sizing:border-box;border:1px solid #c2c2c2;"></div>
<svg class=a style="left:442.06px;top:90.05px;" width=14 height=14 viewBox="0 0 14 14"><path d='M7 13.2 L13.2 6.8 H9.6 V0.8 H4.4 V6.8 H0.8 Z' fill='url(#gGreen)' stroke='#2a9a22' stroke-width='.8'/></svg>
<div class=a style="left:461.89px;top:87.3px;width:22.2px;height:19.5px;background:#e3e3e3;box-sizing:border-box;border:1px solid #c2c2c2;"></div>
<svg class=a style="left:465.99px;top:90.05px;" width=14 height=14 viewBox="0 0 14 14"><path d='M7 7 L6 0.8 M7 7 L12.4 4.5 M7 7 L12 11.5 M7 7 L6 13.2 M7 7 L0.8 9.5' stroke='#8a8a8a' stroke-width='.9'/><circle cx='7' cy='7' r='2.8' fill='#2a8af0'/></svg>
<div class=a style="left:485.82px;top:87.3px;width:22.2px;height:19.5px;background:#e3e3e3;box-sizing:border-box;border:1px solid #c2c2c2;"></div>
<svg class=a style="left:489.92px;top:90.05px;" width=14 height=14 viewBox="0 0 14 14"><path d='M0.8 9.4 L7 6.6 L13.2 9.4 L7 12.2 Z' fill='#fafafa' stroke='#9a9a9a' stroke-width='.6'/><path d='M0.8 9.4 V11 L7 13.8 V12.2 Z' fill='#c8c8c8'/><path d='M13.2 9.4 V11 L7 13.8 V12.2 Z' fill='#6a6a6a'/><path d='M4.6 0.6 H9.4 V5 H12 L7 9.4 L2 5 H4.6 Z' fill='url(#gOrange2)' stroke='#e07010' stroke-width='.6'/></svg>
<div class=a style="left:509.75px;top:87.3px;width:22.2px;height:19.5px;background:#e3e3e3;box-sizing:border-box;border:1px solid #c2c2c2;"></div>
<svg class=a style="left:513.85px;top:90.05px;" width=14 height=14 viewBox="0 0 14 14"><path d='M0.8 9.4 L7 6.6 L13.2 9.4 L7 12.2 Z' fill='#fafafa' stroke='#9a9a9a' stroke-width='.6'/><path d='M0.8 9.4 V11 L7 13.8 V12.2 Z' fill='#c8c8c8'/><path d='M13.2 9.4 V11 L7 13.8 V12.2 Z' fill='#6a6a6a'/><path d='M4.6 0.6 H9.4 V5 H12 L7 9.4 L2 5 H4.6 Z' fill='url(#gOrange2)' stroke='#e07010' stroke-width='.6'/></svg>
<div class=a style="left:268.3px;top:111px;width:1px;height:23px;background:#e8e8e8;"></div>
<div class=a style="left:361.4px;top:111px;width:1px;height:23px;background:#e8e8e8;"></div>
<div class=a style="left:408.4px;top:111px;width:1px;height:23px;background:#e8e8e8;"></div>
<div class=a style="left:483.5px;top:111px;width:1px;height:23px;background:#e8e8e8;"></div>
<div class=a style="left:572.6px;top:111px;width:1px;height:23px;background:#e8e8e8;"></div>
<div class=a style="left:647.3px;top:111px;width:1px;height:23px;background:#e8e8e8;"></div>
<div class=a style="left:684.7px;top:111px;width:1px;height:23px;background:#e8e8e8;"></div>
<div class=a style="left:722px;top:111px;width:1px;height:23px;background:#e8e8e8;"></div>
<span class='t n' style="left:152.80px;top:119.05px;font-family:'Liberation Sans',sans-serif;font-size:10.3px;font-weight:400;color:#111;transform:scaleX(0.8919);">Name</span>
<span class='t n' style="left:304.40px;top:119.05px;font-family:'Liberation Sans',sans-serif;font-size:10.3px;font-weight:400;color:#111;transform:scaleX(0.9405);">Type</span>
<span class='t n' style="left:369.00px;top:119.05px;font-family:'Liberation Sans',sans-serif;font-size:10.3px;font-weight:400;color:#111;transform:scaleX(0.9473);">Incoh...</span>
<span class='t n' style="left:434.50px;top:119.05px;font-family:'Liberation Sans',sans-serif;font-size:10.3px;font-weight:400;color:#111;transform:scaleX(0.9491);">Thickness</span>
<span class='t n' style="left:492.00px;top:119.05px;font-family:'Liberation Sans',sans-serif;font-size:10.3px;font-weight:400;color:#111;transform:scaleX(0.9752);">Optical Property</span>
<span class='t n' style="left:581.50px;top:119.05px;font-family:'Liberation Sans',sans-serif;font-size:10.3px;font-weight:400;color:#111;"># of Variable</span>
<span class='t n' style="left:653.00px;top:119.05px;font-family:'Liberation Sans',sans-serif;font-size:10.3px;font-weight:400;color:#111;transform:scaleX(0.9663);">Sub...</span>
<span class='t n' style="left:691.40px;top:119.05px;font-family:'Liberation Sans',sans-serif;font-size:10.3px;font-weight:400;color:#111;transform:scaleX(0.9752);">Color</span>
<div class=a style="left:147.8px;top:134.0px;width:574.2px;height:17.7px;background:#fdf9c8;"></div>
<div class=a style="left:147.8px;top:151.1px;width:635px;height:1px;background:#ededed;"></div>
<div class=a style="left:268.3px;top:134.0px;width:1px;height:17.7px;background:#ececec;"></div>
<div class=a style="left:361.4px;top:134.0px;width:1px;height:17.7px;background:#ececec;"></div>
<div class=a style="left:408.4px;top:134.0px;width:1px;height:17.7px;background:#ececec;"></div>
<div class=a style="left:483.5px;top:134.0px;width:1px;height:17.7px;background:#ececec;"></div>
<div class=a style="left:572.6px;top:134.0px;width:1px;height:17.7px;background:#ececec;"></div>
<div class=a style="left:647.3px;top:134.0px;width:1px;height:17.7px;background:#ececec;"></div>
<div class=a style="left:684.7px;top:134.0px;width:1px;height:17.7px;background:#ececec;"></div>
<div class=a style="left:722px;top:134.0px;width:1px;height:17.7px;background:#ececec;"></div>
<div class=a style="left:147.8px;top:151.7px;width:574.2px;height:17.7px;background:#fdfde6;"></div>
<div class=a style="left:147.8px;top:168.79999999999998px;width:635px;height:1px;background:#ededed;"></div>
<div class=a style="left:147.8px;top:186.5px;width:635px;height:1px;background:#ededed;"></div>
<div class=a style="left:268.3px;top:169.4px;width:1px;height:17.7px;background:#ececec;"></div>
<div class=a style="left:361.4px;top:169.4px;width:1px;height:17.7px;background:#ececec;"></div>
<div class=a style="left:408.4px;top:169.4px;width:1px;height:17.7px;background:#ececec;"></div>
<div class=a style="left:483.5px;top:169.4px;width:1px;height:17.7px;background:#ececec;"></div>
<div class=a style="left:572.6px;top:169.4px;width:1px;height:17.7px;background:#ececec;"></div>
<div class=a style="left:647.3px;top:169.4px;width:1px;height:17.7px;background:#ececec;"></div>
<div class=a style="left:684.7px;top:169.4px;width:1px;height:17.7px;background:#ececec;"></div>
<div class=a style="left:722px;top:169.4px;width:1px;height:17.7px;background:#ececec;"></div>
<div class=a style="left:147.8px;top:204.2px;width:635px;height:1px;background:#ededed;"></div>
<div class=a style="left:268.3px;top:187.1px;width:1px;height:17.7px;background:#ececec;"></div>
<div class=a style="left:361.4px;top:187.1px;width:1px;height:17.7px;background:#ececec;"></div>
<div class=a style="left:408.4px;top:187.1px;width:1px;height:17.7px;background:#ececec;"></div>
<div class=a style="left:483.5px;top:187.1px;width:1px;height:17.7px;background:#ececec;"></div>
<div class=a style="left:572.6px;top:187.1px;width:1px;height:17.7px;background:#ececec;"></div>
<div class=a style="left:647.3px;top:187.1px;width:1px;height:17.7px;background:#ececec;"></div>
<div class=a style="left:684.7px;top:187.1px;width:1px;height:17.7px;background:#ececec;"></div>
<div class=a style="left:722px;top:187.1px;width:1px;height:17.7px;background:#ececec;"></div>
<div class=a style="left:147.8px;top:221.9px;width:635px;height:1px;background:#ededed;"></div>
<div class=a style="left:268.3px;top:204.8px;width:1px;height:17.7px;background:#ececec;"></div>
<div class=a style="left:361.4px;top:204.8px;width:1px;height:17.7px;background:#ececec;"></div>
<div class=a style="left:408.4px;top:204.8px;width:1px;height:17.7px;background:#ececec;"></div>
<div class=a style="left:483.5px;top:204.8px;width:1px;height:17.7px;background:#ececec;"></div>
<div class=a style="left:572.6px;top:204.8px;width:1px;height:17.7px;background:#ececec;"></div>
<div class=a style="left:647.3px;top:204.8px;width:1px;height:17.7px;background:#ececec;"></div>
<div class=a style="left:684.7px;top:204.8px;width:1px;height:17.7px;background:#ececec;"></div>
<div class=a style="left:722px;top:204.8px;width:1px;height:17.7px;background:#ececec;"></div>
<div class=a style="left:147.8px;top:222.5px;width:574.2px;height:17.7px;background:#fdfde6;"></div>
<div class=a style="left:147.8px;top:239.6px;width:635px;height:1px;background:#ededed;"></div>
<div class=a style="left:147.8px;top:240.2px;width:574.2px;height:17.7px;background:#fdf9c8;"></div>
<div class=a style="left:147.8px;top:257.29999999999995px;width:635px;height:1px;background:#ededed;"></div>
<div class=a style="left:268.3px;top:240.2px;width:1px;height:17.7px;background:#ececec;"></div>
<div class=a style="left:361.4px;top:240.2px;width:1px;height:17.7px;background:#ececec;"></div>
<div class=a style="left:408.4px;top:240.2px;width:1px;height:17.7px;background:#ececec;"></div>
<div class=a style="left:483.5px;top:240.2px;width:1px;height:17.7px;background:#ececec;"></div>
<div class=a style="left:572.6px;top:240.2px;width:1px;height:17.7px;background:#ececec;"></div>
<div class=a style="left:647.3px;top:240.2px;width:1px;height:17.7px;background:#ececec;"></div>
<div class=a style="left:684.7px;top:240.2px;width:1px;height:17.7px;background:#ececec;"></div>
<div class=a style="left:722px;top:240.2px;width:1px;height:17.7px;background:#ececec;"></div>
<div class=a style="left:147.8px;top:274.99999999999994px;width:635px;height:1px;background:#ededed;"></div>
<div class=a style="left:268.3px;top:257.9px;width:1px;height:17.7px;background:#ececec;"></div>
<div class=a style="left:361.4px;top:257.9px;width:1px;height:17.7px;background:#ececec;"></div>
<div class=a style="left:408.4px;top:257.9px;width:1px;height:17.7px;background:#ececec;"></div>
<div class=a style="left:483.5px;top:257.9px;width:1px;height:17.7px;background:#ececec;"></div>
<div class=a style="left:572.6px;top:257.9px;width:1px;height:17.7px;background:#ececec;"></div>
<div class=a style="left:647.3px;top:257.9px;width:1px;height:17.7px;background:#ececec;"></div>
<div class=a style="left:684.7px;top:257.9px;width:1px;height:17.7px;background:#ececec;"></div>
<div class=a style="left:722px;top:257.9px;width:1px;height:17.7px;background:#ececec;"></div>
<div class=a style="left:147.8px;top:292.7px;width:635px;height:1px;background:#ededed;"></div>
<div class=a style="left:268.3px;top:275.6px;width:1px;height:17.7px;background:#ececec;"></div>
<div class=a style="left:361.4px;top:275.6px;width:1px;height:17.7px;background:#ececec;"></div>
<div class=a style="left:408.4px;top:275.6px;width:1px;height:17.7px;background:#ececec;"></div>
<div class=a style="left:483.5px;top:275.6px;width:1px;height:17.7px;background:#ececec;"></div>
<div class=a style="left:572.6px;top:275.6px;width:1px;height:17.7px;background:#ececec;"></div>
<div class=a style="left:647.3px;top:275.6px;width:1px;height:17.7px;background:#ececec;"></div>
<div class=a style="left:684.7px;top:275.6px;width:1px;height:17.7px;background:#ececec;"></div>
<div class=a style="left:722px;top:275.6px;width:1px;height:17.7px;background:#ececec;"></div>
<div class=a style="left:147.8px;top:310.3999999999999px;width:635px;height:1px;background:#ededed;"></div>
<div class=a style="left:268.3px;top:293.29999999999995px;width:1px;height:17.7px;background:#ececec;"></div>
<div class=a style="left:361.4px;top:293.29999999999995px;width:1px;height:17.7px;background:#ececec;"></div>
<div class=a style="left:408.4px;top:293.29999999999995px;width:1px;height:17.7px;background:#ececec;"></div>
<div class=a style="left:483.5px;top:293.29999999999995px;width:1px;height:17.7px;background:#ececec;"></div>
<div class=a style="left:572.6px;top:293.29999999999995px;width:1px;height:17.7px;background:#ececec;"></div>
<div class=a style="left:647.3px;top:293.29999999999995px;width:1px;height:17.7px;background:#ececec;"></div>
<div class=a style="left:684.7px;top:293.29999999999995px;width:1px;height:17.7px;background:#ececec;"></div>
<div class=a style="left:722px;top:293.29999999999995px;width:1px;height:17.7px;background:#ececec;"></div>
<div class=a style="left:147.8px;top:328.09999999999997px;width:635px;height:1px;background:#ededed;"></div>
<div class=a style="left:268.3px;top:311.0px;width:1px;height:17.7px;background:#ececec;"></div>
<div class=a style="left:361.4px;top:311.0px;width:1px;height:17.7px;background:#ececec;"></div>
<div class=a style="left:408.4px;top:311.0px;width:1px;height:17.7px;background:#ececec;"></div>
<div class=a style="left:483.5px;top:311.0px;width:1px;height:17.7px;background:#ececec;"></div>
<div class=a style="left:572.6px;top:311.0px;width:1px;height:17.7px;background:#ececec;"></div>
<div class=a style="left:647.3px;top:311.0px;width:1px;height:17.7px;background:#ececec;"></div>
<div class=a style="left:684.7px;top:311.0px;width:1px;height:17.7px;background:#ececec;"></div>
<div class=a style="left:722px;top:311.0px;width:1px;height:17.7px;background:#ececec;"></div>
<svg class=a style="left:152.5px;top:142px;" width=12 height=110 viewBox="0 0 12 110">
      <path d='M1.5 0 V107' stroke='#b8b8b8' stroke-width='1' stroke-dasharray='1 1'/>
      <path d='M1.5 1.5 H10 M1.5 35.5 H10 M1.5 71 H10 M1.5 106.5 H10' stroke='#b8b8b8' stroke-width='1' stroke-dasharray='1 1'/></svg>
<svg class=a style="left:162.4px;top:136.35px;" width=14 height=13 viewBox="0 0 14 13">
      <path d='M2.8 4.6 L9.4 0.7 Q12.6 0.2 12.6 3.4 L9 10.4 Z' fill='#dedef6' stroke='#8a8ac8' stroke-width='.9'/>
      <ellipse cx='5' cy='7.7' rx='4.2' ry='4.6' transform='rotate(-35 5 7.7)' fill='#f2ee30' stroke='#7474bc' stroke-width='1.25'/></svg>
<span class='t n' style="left:182.10px;top:138.69px;font-family:'Liberation Sans',sans-serif;font-size:10.3px;font-weight:400;color:#111;transform:scaleX(0.9383);">UnitLS</span>
<span class='t n' style="left:286.40px;top:138.69px;font-family:'Liberation Sans',sans-serif;font-size:10.3px;font-weight:400;color:#111;transform:scaleX(0.9857);">Light Source</span>
<span class='t n' style="left:370.85px;top:156.39px;font-family:'Liberation Sans',sans-serif;font-size:10.3px;font-weight:400;color:#9e9660;transform:scaleX(0.9446);">--- STRUCTURE BOUNDARY ---</span>
<span class='t n' style="left:370.85px;top:227.19px;font-family:'Liberation Sans',sans-serif;font-size:10.3px;font-weight:400;color:#9e9660;transform:scaleX(0.9446);">--- STRUCTURE BOUNDARY ---</span>
<svg class=a style="left:162.9px;top:171.25px;" width=13 height=13 viewBox="0 0 13 13"><rect x='0.5' y='0.5' width='12' height='12' rx='1.8' fill='url(#gI)' stroke='#dcc8b0' stroke-width='1'/><text x='6.6' y='10.8' text-anchor='middle' font-family='Liberation Serif' font-weight='700' font-size='11' fill='#111'>I</text></svg>
<span class='t n' style="left:182.10px;top:174.09px;font-family:'Liberation Sans',sans-serif;font-size:10.3px;font-weight:400;color:#111;transform:scaleX(1.0481);">Air</span>
<span class='t n' style="left:308.30px;top:174.09px;font-family:'Liberation Sans',sans-serif;font-size:10.3px;font-weight:400;color:#111;transform:scaleX(1.0481);">Air</span>
<span class='t n' style="left:382.70px;top:174.09px;font-family:'Liberation Sans',sans-serif;font-size:10.3px;font-weight:400;color:#e8101e;transform:scaleX(0.8336);">N</span>
<span class='t n' style="left:439.00px;top:174.09px;font-family:'Liberation Sans',sans-serif;font-size:10.3px;font-weight:400;color:#111;transform:scaleX(0.9316);">0.100 um</span>
<span class='t n' style="left:508.50px;top:174.09px;font-family:'Liberation Sans',sans-serif;font-size:10.3px;font-weight:400;color:#111;">Isotropic</span>
<span class='t n' style="left:608.28px;top:174.09px;font-family:'Liberation Sans',sans-serif;font-size:10.3px;font-weight:400;color:#111;">-</span>
<span class='t n' style="left:656.00px;top:174.09px;font-family:'Liberation Sans',sans-serif;font-size:10.3px;font-weight:400;color:#111;transform:scaleX(0.8317);">SUB.</span>
<div class=a style="left:696.6px;top:171.25px;width:14.7px;height:14px;background:#a6dc84;box-sizing:border-box;border:1px dotted #555;"></div>
<svg class=a style="left:162.9px;top:188.95px;" width=13 height=13 viewBox="0 0 13 13"><rect x='0.5' y='0.5' width='12' height='12' rx='1.8' fill='url(#gL)' stroke='#e8c4c4' stroke-width='1'/><text x='6.5' y='10.5' text-anchor='middle' font-family='Liberation Sans' font-weight='700' font-size='10.5' fill='#111'>L</text></svg>
<div class=a style="left:180.8px;top:188.35px;width:86.8px;height:15.8px;background:#0a78d4;"></div>
<span class='t n' style="left:182.10px;top:191.79px;font-family:'Liberation Sans',sans-serif;font-size:10.3px;font-weight:400;color:#ffffff;transform:scaleX(0.9517);">E7</span>
<span class='t n' style="left:308.90px;top:191.79px;font-family:'Liberation Sans',sans-serif;font-size:10.3px;font-weight:400;color:#111;transform:scaleX(0.9517);">E7</span>
<span class='t n' style="left:382.70px;top:191.79px;font-family:'Liberation Sans',sans-serif;font-size:10.3px;font-weight:400;color:#e8101e;transform:scaleX(0.8336);">N</span>
<span class='t n' style="left:439.00px;top:191.79px;font-family:'Liberation Sans',sans-serif;font-size:10.3px;font-weight:400;color:#111;transform:scaleX(0.9316);">3.000 um</span>
<span class='t n' style="left:510.00px;top:191.79px;font-family:'Liberation Sans',sans-serif;font-size:10.3px;font-weight:400;color:#111;transform:scaleX(0.9825);">Uniaxial</span>
<span class='t n' style="left:608.28px;top:191.79px;font-family:'Liberation Sans',sans-serif;font-size:10.3px;font-weight:400;color:#111;">-</span>
<span class='t n' style="left:657.00px;top:191.79px;font-family:'Liberation Sans',sans-serif;font-size:10.3px;font-weight:400;color:#111;transform:scaleX(0.8734);">FILL</span>
<div class=a style="left:696.6px;top:188.95px;width:14.7px;height:14px;background:#94cde2;box-sizing:border-box;border:1px dotted #555;"></div>
<svg class=a style="left:162.9px;top:206.65px;" width=13 height=13 viewBox="0 0 13 13"><rect x='0.5' y='0.5' width='12' height='12' rx='1.8' fill='url(#gI)' stroke='#dcc8b0' stroke-width='1'/><text x='6.6' y='10.8' text-anchor='middle' font-family='Liberation Serif' font-weight='700' font-size='11' fill='#111'>I</text></svg>
<span class='t n' style="left:182.10px;top:209.50px;font-family:'Liberation Sans',sans-serif;font-size:10.3px;font-weight:400;color:#111;transform:scaleX(1.0481);">Air</span>
<span class='t n' style="left:308.30px;top:209.50px;font-family:'Liberation Sans',sans-serif;font-size:10.3px;font-weight:400;color:#111;transform:scaleX(1.0481);">Air</span>
<span class='t n' style="left:382.70px;top:209.50px;font-family:'Liberation Sans',sans-serif;font-size:10.3px;font-weight:400;color:#e8101e;transform:scaleX(0.8336);">N</span>
<span class='t n' style="left:439.00px;top:209.50px;font-family:'Liberation Sans',sans-serif;font-size:10.3px;font-weight:400;color:#111;transform:scaleX(0.9316);">0.100 um</span>
<span class='t n' style="left:508.50px;top:209.50px;font-family:'Liberation Sans',sans-serif;font-size:10.3px;font-weight:400;color:#111;">Isotropic</span>
<span class='t n' style="left:608.28px;top:209.50px;font-family:'Liberation Sans',sans-serif;font-size:10.3px;font-weight:400;color:#111;">-</span>
<span class='t n' style="left:656.00px;top:209.50px;font-family:'Liberation Sans',sans-serif;font-size:10.3px;font-weight:400;color:#111;transform:scaleX(0.8317);">SUB.</span>
<div class=a style="left:696.6px;top:206.65px;width:14.7px;height:14px;background:#a6dc84;box-sizing:border-box;border:1px dotted #555;"></div>
<svg class=a style="left:162.4px;top:242.54999999999998px;" width=14 height=13 viewBox="0 0 14 13">
      <path d='M2.8 4.6 L9.4 0.7 Q12.6 0.2 12.6 3.4 L9 10.4 Z' fill='#dedef6' stroke='#8a8ac8' stroke-width='.9'/>
      <ellipse cx='5' cy='7.7' rx='4.2' ry='4.6' transform='rotate(-35 5 7.7)' fill='#f2ee30' stroke='#7474bc' stroke-width='1.25'/></svg>
<span class='t n' style="left:182.10px;top:244.89px;font-family:'Liberation Sans',sans-serif;font-size:10.3px;font-weight:400;color:#111;transform:scaleX(0.9582);">External Bottom</span>
<span class='t n' style="left:286.40px;top:244.89px;font-family:'Liberation Sans',sans-serif;font-size:10.3px;font-weight:400;color:#111;transform:scaleX(0.9857);">Light Source</span>
<svg class=a style="left:155.6px;top:184.2px;" width=113.6 height=25.100000000000023 viewBox="0 0 113.6 25.100000000000023"><path d='M3.00 3.00 H110.60 M3.00 22.10 H110.60' stroke='#f00a14' stroke-width='2.8' stroke-dasharray='7.8 3.7' fill='none'/><path d='M3.00 3.00 V22.10 M110.60 3.00 V22.10' stroke='#f00a14' stroke-width='2.8' stroke-dasharray='11 3' fill='none'/></svg>
<div class=a style="left:146px;top:333.8px;width:637px;height:354px;background:#ffffff;"></div>
<div class=a style="left:146px;top:333.8px;width:636px;height:1.4px;background:#a8a8a8;"></div>
<div class=a style="left:146px;top:333.8px;width:1.6px;height:354px;background:#b0b0b0;"></div>
<div class=a style="left:147.8px;top:335.2px;width:634px;height:26.8px;background:#f0f0f0;"></div>
<div class=a style="left:781.5px;top:333.8px;width:1.8px;height:354px;background:#fafafa;"></div>
<div class=a style="left:150.9px;top:339.2px;width:22.2px;height:19px;background:#e3e3e3;box-sizing:border-box;border:1px solid #c2c2c2;"></div>
<svg class=a style="left:155.0px;top:341.7px;" width=14 height=14 viewBox="0 0 14 14"><path d='M3.6 13 Q1.2 10 0.8 7.6 L2.2 6.8 L3.6 8.6 V3 Q4.6 1.8 5.6 3 V1.8 Q6.8 0.6 7.8 1.8 V2.4 Q9 1.4 10 2.6 V3.6 Q11.2 2.8 12 4 V9 Q11.8 12 10.2 13 Z' fill='url(#gHand)' stroke='#c08018' stroke-width='.9'/></svg>
<div class=a style="left:174.78px;top:339.2px;width:22.2px;height:19px;background:#e3e3e3;box-sizing:border-box;border:1px solid #c2c2c2;"></div>
<svg class=a style="left:178.88px;top:341.7px;" width=14 height=14 viewBox="0 0 14 14"><path d='M3 11 L11 3' stroke='#c89010' stroke-width='2.2'/><path d='M3 11 L11 3' stroke='#8a6a10' stroke-width='.6'/><rect x='0.6' y='8.6' width='4.8' height='4.8' rx='.8' fill='#2a88f0'/><rect x='8.6' y='0.6' width='4.8' height='4.8' rx='.8' fill='#2a88f0'/></svg>
<div class=a style="left:198.66px;top:339.2px;width:22.2px;height:19px;background:#e3e3e3;box-sizing:border-box;border:1px solid #c2c2c2;"></div>
<svg class=a style="left:202.76px;top:341.7px;" width=14 height=14 viewBox="0 0 14 14"><rect x='1' y='1' width='12' height='12' fill='none' stroke='#2a48c0' stroke-width='1.6' stroke-dasharray='1.4 .9'/><circle cx='5.6' cy='5.4' r='3.6' fill='url(#gLens)'/><path d='M8 8 L12 12' stroke='#f07a30' stroke-width='2.4'/></svg>
<div class=a style="left:222.54000000000002px;top:339.2px;width:22.2px;height:19px;background:#e3e3e3;box-sizing:border-box;border:1px solid #c2c2c2;"></div>
<svg class=a style="left:226.64000000000001px;top:341.7px;" width=14 height=14 viewBox="0 0 14 14"><rect x='0.5' y='0.5' width='13' height='13' fill='#eeeefa'/><path d='M1 1 L13 13 M13 1 L1 13 M7 1 V13 M1 7 H13 M4 1 V13 M10 1 V13 M1 4 H13 M1 10 H13' stroke='#c0a060' stroke-width='1.1' stroke-dasharray='1.2 1'/><circle cx='7' cy='7' r='1.6' fill='#c09050'/></svg>
<div class=a style="left:246.42000000000002px;top:339.2px;width:22.2px;height:19px;box-sizing:border-box;border:2px solid #3a72b8;background:linear-gradient(#eaf5fe,#d0e7fb);border-radius:2px;box-shadow:inset 0 0 0 1px #f4faff;"></div>
<svg class=a style="left:250.52px;top:341.7px;" width=14 height=14 viewBox="0 0 14 14"><rect x='0.5' y='0.5' width='13' height='13' fill='#ecebfb'/><path d='M2 1 V13 M7 1 V13 M12 1 V13 M1 2 H13 M1 7 H13 M1 12 H13' stroke='#6a6a80' stroke-width='1' stroke-dasharray='1 1'/></svg>
<div class=a style="left:270.3px;top:339.2px;width:22.2px;height:19px;box-sizing:border-box;border:2px solid #3a72b8;background:linear-gradient(#eaf5fe,#d0e7fb);border-radius:2px;box-shadow:inset 0 0 0 1px #f4faff;"></div>
<svg class=a style="left:274.40000000000003px;top:341.7px;" width=14 height=14 viewBox="0 0 14 14"><rect x='0.5' y='0.5' width='13' height='13' fill='url(#gLav)'/><path d='M1 9.5 H13' stroke='#f0a0a0' stroke-width='1.2' stroke-dasharray='1 1'/><path d='M1 11 Q2.5 13.5 4 11 Q5.5 13.5 7 11 Q8.5 13.5 10 11 Q11.5 13.5 13 11' fill='none' stroke='#2a48b0' stroke-width='1.3'/></svg>
<div class=a style="left:294.18px;top:339.2px;width:22.2px;height:19px;box-sizing:border-box;border:2px solid #3a72b8;background:linear-gradient(#eaf5fe,#d0e7fb);border-radius:2px;box-shadow:inset 0 0 0 1px #f4faff;"></div>
<svg class=a style="left:298.28000000000003px;top:341.7px;" width=14 height=14 viewBox="0 0 14 14"><rect x='0.5' y='0.5' width='13' height='13' fill='#ecebfb'/><path d='M2 1 Q0.8 2.5 2 4 Q0.8 5.5 2 7 Q0.8 8.5 2 10 Q0.8 11.5 2 13 M12 1 Q13.2 2.5 12 4 Q13.2 5.5 12 7 Q13.2 8.5 12 10 Q13.2 11.5 12 13' fill='none' stroke='#2a48b0' stroke-width='1.3'/><path d='M3.5 2.5 H5 M3.5 5.5 H5 M3.5 8.5 H5 M3.5 11.5 H5 M9.5 2.5 H10.5 M9.5 5.5 H10.5 M9.5 8.5 H10.5 M9.5 11.5 H10.5' stroke='#f09080' stroke-width='1.2'/></svg>
<div class=a style="left:318.06px;top:339.2px;width:22.2px;height:19px;background:#e3e3e3;box-sizing:border-box;border:1px solid #c2c2c2;"></div>
<svg class=a style="left:322.16px;top:341.7px;" width=14 height=14 viewBox="0 0 14 14"><path d='M2.6 2 V11.8 H12.4' fill='none' stroke='#2a50b8' stroke-width='1.6'/><circle cx='2.6' cy='2' r='1.6' fill='#f0a020'/><circle cx='12.4' cy='11.8' r='1.6' fill='#f0a020'/><path d='M5 0.8 L7 2.8 M7 0.8 L5 2.8' stroke='#2a70e0' stroke-width='1.1'/><path d='M10 6 L12.5 8.5 M12.5 6 L10 8.5' stroke='#f04848' stroke-width='1.2'/></svg>
<div class=a style="left:341.94px;top:339.2px;width:22.2px;height:19px;background:#e3e3e3;box-sizing:border-box;border:1px solid #c2c2c2;"></div>
<svg class=a style="left:346.04px;top:341.7px;" width=14 height=14 viewBox="0 0 14 14"><circle cx='5.2' cy='5.2' r='4.3' fill='url(#gLens)' stroke='#6a6a78' stroke-width='1.1'/><path d='M8.2 8.2 L12.8 12.8' stroke='#f04a20' stroke-width='3.2'/><path d='M8.6 9.8 L9.8 8.6 M10.2 11.4 L11.4 10.2' stroke='#ffd040' stroke-width='1.1'/><path d='M3 5.2 H7.4 M5.2 3 V7.4' stroke='#20a020' stroke-width='1.6'/></svg>
<div class=a style="left:365.82px;top:339.2px;width:22.2px;height:19px;background:#e3e3e3;box-sizing:border-box;border:1px solid #c2c2c2;"></div>
<svg class=a style="left:369.92px;top:341.7px;" width=14 height=14 viewBox="0 0 14 14"><circle cx='5.2' cy='5.2' r='4.3' fill='url(#gLens)' stroke='#6a6a78' stroke-width='1.1'/><path d='M8.2 8.2 L12.8 12.8' stroke='#f04a20' stroke-width='3.2'/><path d='M8.6 9.8 L9.8 8.6 M10.2 11.4 L11.4 10.2' stroke='#ffd040' stroke-width='1.1'/><path d='M3 5.2 H7.4' stroke='#c02020' stroke-width='1.6'/></svg>
<div class=a style="left:389.7px;top:339.2px;width:22.2px;height:19px;background:#e3e3e3;box-sizing:border-box;border:1px solid #c2c2c2;"></div>
<svg class=a style="left:393.8px;top:341.7px;" width=14 height=14 viewBox="0 0 14 14"><path d='M2 2 H12 V12 H2 Z' fill='#f4f4fa' stroke='#2848b8' stroke-width='1.5'/><circle cx='2' cy='2' r='1.3' fill='#2040b0'/><circle cx='12' cy='2' r='1.3' fill='#2040b0'/><circle cx='2' cy='12' r='1.3' fill='#2040b0'/><circle cx='12' cy='12' r='1.3' fill='#2040b0'/><ellipse cx='7' cy='7' rx='4.2' ry='2.8' fill='#f0b020' stroke='#c08010' stroke-width='.6'/><ellipse cx='7' cy='7' rx='2' ry='1.1' fill='#f4f4fa'/></svg>
<div class=a style="left:413.58000000000004px;top:339.2px;width:22.2px;height:19px;background:#e3e3e3;box-sizing:border-box;border:1px solid #c2c2c2;"></div>
<svg class=a style="left:417.68000000000006px;top:341.7px;" width=14 height=14 viewBox="0 0 14 14"><path d='M2 2 H12 V12 H2 Z' fill='#f4f4fa' stroke='#2848b8' stroke-width='1.5'/><circle cx='2' cy='2' r='1.3' fill='#2040b0'/><circle cx='12' cy='2' r='1.3' fill='#2040b0'/><circle cx='2' cy='12' r='1.3' fill='#2040b0'/><circle cx='12' cy='12' r='1.3' fill='#2040b0'/><path d='M7 2.6 L9 5 H5 Z M7 11.4 L9 9 H5 Z M2.6 7 L5 5 V9 Z M11.4 7 L9 5 V9 Z' fill='#f0a818'/><rect x='5' y='5' width='4' height='4' fill='#e8e8f4'/></svg>
<div class=a style="left:437.46000000000004px;top:339.2px;width:22.2px;height:19px;background:#e3e3e3;box-sizing:border-box;border:1px solid #c2c2c2;"></div>
<svg class=a style="left:441.56000000000006px;top:341.7px;" width=14 height=14 viewBox="0 0 14 14"><path d='M2 2 H12 V12 H2 Z' fill='#f4f4fa' stroke='#2848b8' stroke-width='1.5'/><circle cx='2' cy='2' r='1.3' fill='#2040b0'/><circle cx='12' cy='2' r='1.3' fill='#2040b0'/><circle cx='2' cy='12' r='1.3' fill='#2040b0'/><circle cx='12' cy='12' r='1.3' fill='#2040b0'/><rect x='4.5' y='4.5' width='5' height='5' fill='url(#gYel)' stroke='#d09010' stroke-width='.6'/></svg>
<div class=a style="left:461.34000000000003px;top:339.2px;width:22.2px;height:19px;background:#e3e3e3;box-sizing:border-box;border:1px solid #c2c2c2;"></div>
<svg class=a style="left:465.44000000000005px;top:341.7px;" width=14 height=14 viewBox="0 0 14 14"><path d='M0.8 9.4 L7 6.6 L13.2 9.4 L7 12.2 Z' fill='#fafafa' stroke='#9a9a9a' stroke-width='.6'/><path d='M0.8 9.4 V11 L7 13.8 V12.2 Z' fill='#c8c8c8'/><path d='M13.2 9.4 V11 L7 13.8 V12.2 Z' fill='#6a6a6a'/><path d='M7 0.4 L12 5 H9.4 V9.2 H4.6 V5 H2 Z' fill='url(#gGreen)' stroke='#30a020' stroke-width='.6'/></svg>
<svg class=a style="left:147.8px;top:362px;" width=634 height=326 viewBox="0 0 634 326"><rect x='235.70' y='15.06' width='161.92' height='9.22' fill='#b0dd88'/><rect x='235.70' y='300.88' width='161.92' height='9.22' fill='#b0dd88'/><rect x='236.20' y='24.78' width='161.42' height='276.10' fill='#96cde3' stroke='#222' stroke-width='1' stroke-dasharray='1 .6'/><line x1='5.70' y1='0' x2='5.70' y2='326' stroke='#cdcdcd' stroke-width='1' stroke-dasharray='1 1'/><line x1='51.70' y1='0' x2='51.70' y2='326' stroke='#cdcdcd' stroke-width='1' stroke-dasharray='1 1'/><line x1='97.70' y1='0' x2='97.70' y2='326' stroke='#cdcdcd' stroke-width='1' stroke-dasharray='1 1'/><line x1='143.70' y1='0' x2='143.70' y2='326' stroke='#cdcdcd' stroke-width='1' stroke-dasharray='1 1'/><line x1='189.70' y1='0' x2='189.70' y2='326' stroke='#cdcdcd' stroke-width='1' stroke-dasharray='1 1'/><line x1='235.70' y1='0' x2='235.70' y2='326' stroke='#cdcdcd' stroke-width='1' stroke-dasharray='1 1'/><line x1='281.70' y1='0' x2='281.70' y2='326' stroke='#cdcdcd' stroke-width='1' stroke-dasharray='1 1'/><line x1='327.70' y1='0' x2='327.70' y2='326' stroke='#cdcdcd' stroke-width='1' stroke-dasharray='1 1'/><line x1='373.70' y1='0' x2='373.70' y2='326' stroke='#cdcdcd' stroke-width='1' stroke-dasharray='1 1'/><line x1='419.70' y1='0' x2='419.70' y2='326' stroke='#cdcdcd' stroke-width='1' stroke-dasharray='1 1'/><line x1='465.70' y1='0' x2='465.70' y2='326' stroke='#cdcdcd' stroke-width='1' stroke-dasharray='1 1'/><line x1='511.70' y1='0' x2='511.70' y2='326' stroke='#cdcdcd' stroke-width='1' stroke-dasharray='1 1'/><line x1='557.70' y1='0' x2='557.70' y2='326' stroke='#cdcdcd' stroke-width='1' stroke-dasharray='1 1'/><line x1='603.70' y1='0' x2='603.70' y2='326' stroke='#cdcdcd' stroke-width='1' stroke-dasharray='1 1'/><line x1='5' y1='310.10' x2='633' y2='310.10' stroke='#cdcdcd' stroke-width='1' stroke-dasharray='1 1'/><line x1='5' y1='291.66' x2='633' y2='291.66' stroke='#cdcdcd' stroke-width='1' stroke-dasharray='1 1'/><line x1='5' y1='273.22' x2='633' y2='273.22' stroke='#cdcdcd' stroke-width='1' stroke-dasharray='1 1'/><line x1='5' y1='254.78' x2='633' y2='254.78' stroke='#cdcdcd' stroke-width='1' stroke-dasharray='1 1'/><line x1='5' y1='236.34' x2='633' y2='236.34' stroke='#cdcdcd' stroke-width='1' stroke-dasharray='1 1'/><line x1='5' y1='217.90' x2='633' y2='217.90' stroke='#cdcdcd' stroke-width='1' stroke-dasharray='1 1'/><line x1='5' y1='199.46' x2='633' y2='199.46' stroke='#cdcdcd' stroke-width='1' stroke-dasharray='1 1'/><line x1='5' y1='181.02' x2='633' y2='181.02' stroke='#cdcdcd' stroke-width='1' stroke-dasharray='1 1'/><line x1='5' y1='162.58' x2='633' y2='162.58' stroke='#cdcdcd' stroke-width='1' stroke-dasharray='1 1'/><line x1='5' y1='144.14' x2='633' y2='144.14' stroke='#cdcdcd' stroke-width='1' stroke-dasharray='1 1'/><line x1='5' y1='125.70' x2='633' y2='125.70' stroke='#cdcdcd' stroke-width='1' stroke-dasharray='1 1'/><line x1='5' y1='107.26' x2='633' y2='107.26' stroke='#cdcdcd' stroke-width='1' stroke-dasharray='1 1'/><line x1='5' y1='88.82' x2='633' y2='88.82' stroke='#cdcdcd' stroke-width='1' stroke-dasharray='1 1'/><line x1='5' y1='70.38' x2='633' y2='70.38' stroke='#cdcdcd' stroke-width='1' stroke-dasharray='1 1'/><line x1='5' y1='51.94' x2='633' y2='51.94' stroke='#cdcdcd' stroke-width='1' stroke-dasharray='1 1'/><line x1='5' y1='33.50' x2='633' y2='33.50' stroke='#cdcdcd' stroke-width='1' stroke-dasharray='1 1'/><line x1='5' y1='15.06' x2='633' y2='15.06' stroke='#cdcdcd' stroke-width='1' stroke-dasharray='1 1'/><rect x='314.80' y='21.78' width='4.8' height='5' fill='#111'/><rect x='314.80' y='298.38' width='4.8' height='5' fill='#111'/></svg>
<span class='t n' style="left:149.50px;top:667.73px;font-family:'Liberation Sans',sans-serif;font-size:10.2px;font-weight:400;color:#222;transform:scaleX(1.0443);">0.0</span>
<span class='t n' style="left:763.50px;top:667.73px;font-family:'Liberation Sans',sans-serif;font-size:10.2px;font-weight:400;color:#222;transform:scaleX(1.0443);">0.0</span>
<span class='t n' style="left:149.50px;top:649.29px;font-family:'Liberation Sans',sans-serif;font-size:10.2px;font-weight:400;color:#222;transform:scaleX(1.0443);">0.2</span>
<span class='t n' style="left:763.50px;top:649.29px;font-family:'Liberation Sans',sans-serif;font-size:10.2px;font-weight:400;color:#222;transform:scaleX(1.0443);">0.2</span>
<span class='t n' style="left:149.50px;top:630.85px;font-family:'Liberation Sans',sans-serif;font-size:10.2px;font-weight:400;color:#222;transform:scaleX(1.0443);">0.4</span>
<span class='t n' style="left:763.50px;top:630.85px;font-family:'Liberation Sans',sans-serif;font-size:10.2px;font-weight:400;color:#222;transform:scaleX(1.0443);">0.4</span>
<span class='t n' style="left:149.50px;top:612.41px;font-family:'Liberation Sans',sans-serif;font-size:10.2px;font-weight:400;color:#222;transform:scaleX(1.0443);">0.6</span>
<span class='t n' style="left:763.50px;top:612.41px;font-family:'Liberation Sans',sans-serif;font-size:10.2px;font-weight:400;color:#222;transform:scaleX(1.0443);">0.6</span>
<span class='t n' style="left:149.50px;top:593.97px;font-family:'Liberation Sans',sans-serif;font-size:10.2px;font-weight:400;color:#222;transform:scaleX(1.0443);">0.8</span>
<span class='t n' style="left:763.50px;top:593.97px;font-family:'Liberation Sans',sans-serif;font-size:10.2px;font-weight:400;color:#222;transform:scaleX(1.0443);">0.8</span>
<span class='t n' style="left:149.50px;top:575.53px;font-family:'Liberation Sans',sans-serif;font-size:10.2px;font-weight:400;color:#222;transform:scaleX(1.0443);">1.0</span>
<span class='t n' style="left:763.50px;top:575.53px;font-family:'Liberation Sans',sans-serif;font-size:10.2px;font-weight:400;color:#222;transform:scaleX(1.0443);">1.0</span>
<span class='t n' style="left:149.50px;top:557.09px;font-family:'Liberation Sans',sans-serif;font-size:10.2px;font-weight:400;color:#222;transform:scaleX(1.0443);">1.2</span>
<span class='t n' style="left:763.50px;top:557.09px;font-family:'Liberation Sans',sans-serif;font-size:10.2px;font-weight:400;color:#222;transform:scaleX(1.0443);">1.2</span>
<span class='t n' style="left:149.50px;top:538.65px;font-family:'Liberation Sans',sans-serif;font-size:10.2px;font-weight:400;color:#222;transform:scaleX(1.0443);">1.4</span>
<span class='t n' style="left:763.50px;top:538.65px;font-family:'Liberation Sans',sans-serif;font-size:10.2px;font-weight:400;color:#222;transform:scaleX(1.0443);">1.4</span>
<span class='t n' style="left:149.50px;top:520.21px;font-family:'Liberation Sans',sans-serif;font-size:10.2px;font-weight:400;color:#222;transform:scaleX(1.0443);">1.6</span>
<span class='t n' style="left:763.50px;top:520.21px;font-family:'Liberation Sans',sans-serif;font-size:10.2px;font-weight:400;color:#222;transform:scaleX(1.0443);">1.6</span>
<span class='t n' style="left:149.50px;top:501.77px;font-family:'Liberation Sans',sans-serif;font-size:10.2px;font-weight:400;color:#222;transform:scaleX(1.0443);">1.8</span>
<span class='t n' style="left:763.50px;top:501.77px;font-family:'Liberation Sans',sans-serif;font-size:10.2px;font-weight:400;color:#222;transform:scaleX(1.0443);">1.8</span>
<span class='t n' style="left:149.50px;top:483.33px;font-family:'Liberation Sans',sans-serif;font-size:10.2px;font-weight:400;color:#222;transform:scaleX(1.0443);">2.0</span>
<span class='t n' style="left:763.50px;top:483.33px;font-family:'Liberation Sans',sans-serif;font-size:10.2px;font-weight:400;color:#222;transform:scaleX(1.0443);">2.0</span>
<span class='t n' style="left:149.50px;top:464.89px;font-family:'Liberation Sans',sans-serif;font-size:10.2px;font-weight:400;color:#222;transform:scaleX(1.0443);">2.2</span>
<span class='t n' style="left:763.50px;top:464.89px;font-family:'Liberation Sans',sans-serif;font-size:10.2px;font-weight:400;color:#222;transform:scaleX(1.0443);">2.2</span>
<span class='t n' style="left:149.50px;top:446.45px;font-family:'Liberation Sans',sans-serif;font-size:10.2px;font-weight:400;color:#222;transform:scaleX(1.0443);">2.4</span>
<span class='t n' style="left:763.50px;top:446.45px;font-family:'Liberation Sans',sans-serif;font-size:10.2px;font-weight:400;color:#222;transform:scaleX(1.0443);">2.4</span>
<span class='t n' style="left:149.50px;top:428.01px;font-family:'Liberation Sans',sans-serif;font-size:10.2px;font-weight:400;color:#222;transform:scaleX(1.0443);">2.6</span>
<span class='t n' style="left:763.50px;top:428.01px;font-family:'Liberation Sans',sans-serif;font-size:10.2px;font-weight:400;color:#222;transform:scaleX(1.0443);">2.6</span>
<span class='t n' style="left:149.50px;top:409.57px;font-family:'Liberation Sans',sans-serif;font-size:10.2px;font-weight:400;color:#222;transform:scaleX(1.0443);">2.8</span>
<span class='t n' style="left:763.50px;top:409.57px;font-family:'Liberation Sans',sans-serif;font-size:10.2px;font-weight:400;color:#222;transform:scaleX(1.0443);">2.8</span>
<span class='t n' style="left:149.50px;top:391.13px;font-family:'Liberation Sans',sans-serif;font-size:10.2px;font-weight:400;color:#222;transform:scaleX(1.0443);">3.0</span>
<span class='t n' style="left:763.50px;top:391.13px;font-family:'Liberation Sans',sans-serif;font-size:10.2px;font-weight:400;color:#222;transform:scaleX(1.0443);">3.0</span>
<span class='t n' style="left:149.50px;top:372.69px;font-family:'Liberation Sans',sans-serif;font-size:10.2px;font-weight:400;color:#222;transform:scaleX(1.0443);">3.2</span>
<span class='t n' style="left:763.50px;top:372.69px;font-family:'Liberation Sans',sans-serif;font-size:10.2px;font-weight:400;color:#222;transform:scaleX(1.0443);">3.2</span>
<span class='t n' style="left:146.60px;top:676.73px;font-family:'Liberation Sans',sans-serif;font-size:10.2px;font-weight:400;color:#222;transform:scaleX(1.0443);">2.5</span>
<span class='t n' style="left:190.25px;top:676.73px;font-family:'Liberation Sans',sans-serif;font-size:10.2px;font-weight:400;color:#222;transform:scaleX(1.0534);">-2.0</span>
<span class='t n' style="left:236.25px;top:676.73px;font-family:'Liberation Sans',sans-serif;font-size:10.2px;font-weight:400;color:#222;transform:scaleX(1.0534);">-1.5</span>
<span class='t n' style="left:282.25px;top:676.73px;font-family:'Liberation Sans',sans-serif;font-size:10.2px;font-weight:400;color:#222;transform:scaleX(1.0534);">-1.0</span>
<span class='t n' style="left:328.25px;top:676.73px;font-family:'Liberation Sans',sans-serif;font-size:10.2px;font-weight:400;color:#222;transform:scaleX(1.0534);">-0.5</span>
<span class='t n' style="left:376.10px;top:676.73px;font-family:'Liberation Sans',sans-serif;font-size:10.2px;font-weight:400;color:#222;transform:scaleX(1.0443);">0.0</span>
<span class='t n' style="left:422.10px;top:676.73px;font-family:'Liberation Sans',sans-serif;font-size:10.2px;font-weight:400;color:#222;transform:scaleX(1.0443);">0.5</span>
<span class='t n' style="left:468.10px;top:676.73px;font-family:'Liberation Sans',sans-serif;font-size:10.2px;font-weight:400;color:#222;transform:scaleX(1.0443);">1.0</span>
<span class='t n' style="left:514.10px;top:676.73px;font-family:'Liberation Sans',sans-serif;font-size:10.2px;font-weight:400;color:#222;transform:scaleX(1.0443);">1.5</span>
<span class='t n' style="left:560.10px;top:676.73px;font-family:'Liberation Sans',sans-serif;font-size:10.2px;font-weight:400;color:#222;transform:scaleX(1.0443);">2.0</span>
<span class='t n' style="left:606.10px;top:676.73px;font-family:'Liberation Sans',sans-serif;font-size:10.2px;font-weight:400;color:#222;transform:scaleX(1.0443);">2.5</span>
<span class='t n' style="left:652.10px;top:676.73px;font-family:'Liberation Sans',sans-serif;font-size:10.2px;font-weight:400;color:#222;transform:scaleX(1.0443);">3.0</span>
<span class='t n' style="left:698.10px;top:676.73px;font-family:'Liberation Sans',sans-serif;font-size:10.2px;font-weight:400;color:#222;transform:scaleX(1.0443);">3.5</span>
<span class='t n' style="left:744.10px;top:676.73px;font-family:'Liberation Sans',sans-serif;font-size:10.2px;font-weight:400;color:#222;transform:scaleX(1.0443);">4.0</span>
<div class=a style="left:7px;top:688.5px;width:1032px;height:17.5px;background:#f0f0f0;"></div>
<span class='t n' style="left:9.00px;top:692.25px;font-family:'Liberation Sans',sans-serif;font-size:11px;font-weight:400;color:#222;transform:scaleX(0.9120);">Ready</span>
<div class=a style="left:805.4px;top:690px;width:1.2px;height:15px;background:#fafafa;"></div>
<div class=a style="left:925px;top:690px;width:1.2px;height:15px;background:#fafafa;"></div>
<div class=a style="left:927px;top:689.5px;width:26.399999999999977px;height:16px;background:#ececec;box-sizing:border-box;border:1px solid #e4e4e4;"></div>
<div class=a style="left:956.3px;top:689.5px;width:31.5px;height:16px;background:#ececec;box-sizing:border-box;border:1px solid #e4e4e4;"></div>
<div class=a style="left:990px;top:689.5px;width:31px;height:16px;background:#ececec;box-sizing:border-box;border:1px solid #e4e4e4;"></div>
<span class='t n' style="left:930.40px;top:692.02px;font-family:'Liberation Sans',sans-serif;font-size:11.5px;font-weight:400;color:#8a8a8a;transform:scaleX(0.8539);">CAP</span>
<span class='t n' style="left:959.00px;top:692.02px;font-family:'Liberation Sans',sans-serif;font-size:11.5px;font-weight:400;color:#222;transform:scaleX(0.9465);">NUM</span>
<span class='t n' style="left:992.80px;top:692.02px;font-family:'Liberation Sans',sans-serif;font-size:11.5px;font-weight:400;color:#8a8a8a;transform:scaleX(0.8212);">SCRL</span>
<svg class=a style="left:1025px;top:691px;" width=14 height=14 viewBox="0 0 14 14"><path d='M13 2 L2 13 M13 6 L6 13 M13 10 L10 13' stroke='#a0a0a0' stroke-width='1.2'/></svg>
<div class=a style="left:784.3px;top:82.7px;width:1.3px;height:605px;background:#d6d6d6;"></div>
<span class='t' style="left:794.00px;top:85.85px;font-family:'Liberation Sans',sans-serif;font-size:11px;font-weight:700;color:#111;transform:scaleX(0.9922);">Properties</span>
<div class=a style="left:852px;top:87px;width:156px;height:6.6px;background:#d4d4d4;"></div>
<div class=a style="left:1013.7px;top:86.5px;width:8.8px;height:8.2px;box-sizing:border-box;border:1px solid #6a6a6a;"></div>
<div class=a style="left:1014.7px;top:87.5px;width:6.8px;height:1px;background:#6a6a6a;"></div>
<svg class=a style="left:1027.7px;top:86.5px;" width=8.2 height=8.2 viewBox="0 0 8.2 8.2"><path d='M0.8 0.8 L7.4 7.4 M7.4 0.8 L0.8 7.4' stroke='#111' stroke-width='1.6'/></svg>
<div class=a style="left:793px;top:100.4px;width:243.2px;height:21.3px;background:linear-gradient(#84c8fd,#3da0f7);"></div>
<span class='t' style="left:799.50px;top:106.15px;font-family:'Liberation Sans',sans-serif;font-size:11px;font-weight:700;color:#f4f9ff;transform:scaleX(0.9922);">Properties</span>
<div class=a style="left:797.0px;top:124.8px;width:23px;height:21px;background:#e3e3e3;box-sizing:border-box;border:1px solid #c2c2c2;"></div>
<svg class=a style="left:801.5px;top:128.3px;" width=14 height=14 viewBox="0 0 14 14"><path d='M9.03 8.23 L9.03 9.77 L7.83 9.65 L7.40 10.68 L8.34 11.45 L7.25 12.54 L6.48 11.60 L5.45 12.03 L5.57 13.23 L4.03 13.23 L4.15 12.03 L3.12 11.60 L2.35 12.54 L1.26 11.45 L2.20 10.68 L1.77 9.65 L0.57 9.77 L0.57 8.23 L1.77 8.35 L2.20 7.32 L1.26 6.55 L2.35 5.46 L3.12 6.40 L4.15 5.97 L4.03 4.77 L5.57 4.77 L5.45 5.97 L6.48 6.40 L7.25 5.46 L8.34 6.55 L7.40 7.32 L7.83 8.35 Z' fill='#a8a8dc' stroke='#7a7ab8' stroke-width='.6'/><circle cx='4.8' cy='9' r='1.38' fill='#e8e8f4'/><path d='M13.54 3.56 L13.54 4.84 L12.53 4.75 L12.18 5.60 L12.96 6.25 L12.05 7.16 L11.40 6.38 L10.55 6.73 L10.64 7.74 L9.36 7.74 L9.45 6.73 L8.60 6.38 L7.95 7.16 L7.04 6.25 L7.82 5.60 L7.47 4.75 L6.46 4.84 L6.46 3.56 L7.47 3.65 L7.82 2.80 L7.04 2.15 L7.95 1.24 L8.60 2.02 L9.45 1.67 L9.36 0.66 L10.64 0.66 L10.55 1.67 L11.40 2.02 L12.05 1.24 L12.96 2.15 L12.18 2.80 L12.53 3.65 Z' fill='#a8a8dc' stroke='#7a7ab8' stroke-width='.6'/><circle cx='10' cy='4.2' r='1.15' fill='#e8e8f4'/></svg>
<div class=a style="left:822.25px;top:124.8px;width:23px;height:21px;background:#e3e3e3;box-sizing:border-box;border:1px solid #c2c2c2;"></div>
<svg class=a style="left:826.75px;top:128.3px;" width=14 height=14 viewBox="0 0 14 14"><rect x='1' y='1' width='12' height='12.4' rx='2' fill='#f6f9fe' stroke='#6a8ad8' stroke-width='1.1'/><path d='M3.4 3 V10.6 M3.4 6 H5.6 M3.4 10.2 H5.6' fill='none' stroke='#2a86e0' stroke-width='1.2'/><path d='M6.8 4 H10.8 M6.8 7.2 H10.8 M7.8 10.4 H10.8' stroke='#7a7a7a' stroke-width='1.3'/></svg>
<div class=a style="left:847.5px;top:124.8px;width:23px;height:21px;background:#e3e3e3;box-sizing:border-box;border:1px solid #c2c2c2;"></div>
<svg class=a style="left:852.0px;top:128.3px;" width=14 height=14 viewBox="0 0 14 14"><rect x='1' y='1' width='12' height='12.4' rx='2' fill='#f6f9fe' stroke='#6a8ad8' stroke-width='1.1'/><path d='M2.8 3.6 H6 M7 3.6 H11 M2.8 5.8 H6 M2.8 8 H8 M2.8 10.2 H6 M2.8 12 H6' stroke='#7a8ab0' stroke-width='.9'/><path d='M7.5 3.6 H11.2 M8 5.8 H11.2 M2.8 8 H8.5 M7.5 10.2 H11.2 M8.5 12 H11.2' stroke='#f03a18' stroke-width='1'/></svg>
<div class=a style="left:872.75px;top:124.8px;width:23px;height:21px;background:#e3e3e3;box-sizing:border-box;border:1px solid #c2c2c2;"></div>
<svg class=a style="left:877.25px;top:128.3px;" width=14 height=14 viewBox="0 0 14 14"><path d='M6 13 Q1 12 1.2 7 Q1.5 1.2 7.5 1 Q12.6 1.2 13 6' fill='none' stroke='#6a6a6a' stroke-width='1'/><path d='M2.8 6 Q3.8 3.2 6 3.6 L4.8 6.4 Z' fill='#f4c020'/><path d='M7.6 1.8 L10.5 3.5 L8 5.2 Z' fill='#f04030'/><path d='M8.6 6 L12.6 5.5 L12.8 10 Q11 13.4 8.2 13.4 L7.5 10 Z' fill='#2a6ad8'/><path d='M5.8 9.8 L7.4 11.6 L10.6 7.6' fill='none' stroke='#4ac04a' stroke-width='1.2'/></svg>
<div class=a style="left:798px;top:153px;width:9px;height:9px;background:#fcfcfc;box-sizing:border-box;border:1px solid #8a8a8a;"></div>
<div class=a style="left:800px;top:157px;width:5px;height:1px;background:#222;"></div>
<span class='t' style="left:813.60px;top:152.44px;font-family:'Liberation Sans',sans-serif;font-size:11.6px;font-weight:700;color:#111;transform:scaleX(0.9561);">Layer Properties</span>
<div class=a style="left:809.3px;top:168.8px;width:133.1px;height:16.2px;background:#ffffff;"></div>
<div class=a style="left:943.6px;top:168.8px;width:89.5px;height:16.2px;background:#ffffff;"></div>
<span class='t n' style="left:812.90px;top:170.99px;font-family:'Liberation Sans',sans-serif;font-size:10.6px;font-weight:400;color:#222;transform:scaleX(0.8314);">Name</span>
<span class='t n' style="left:946.90px;top:171.89px;font-family:'Liberation Sans',sans-serif;font-size:10.6px;font-weight:400;color:#111;transform:scaleX(0.9253);">E7</span>
<div class=a style="left:809.3px;top:186.6px;width:133.1px;height:16.2px;background:#ffffff;"></div>
<div class=a style="left:943.6px;top:186.6px;width:89.5px;height:16.2px;background:#ffffff;"></div>
<span class='t n' style="left:812.90px;top:188.79px;font-family:'Liberation Sans',sans-serif;font-size:10.6px;font-weight:400;color:#222;transform:scaleX(0.9081);">Color</span>
<div class=a style="left:946.5px;top:188.1px;width:15px;height:14px;background:#94cde2;box-sizing:border-box;border:1px dotted #555;"></div>
<div class=a style="left:809.3px;top:204.4px;width:133.1px;height:16.2px;background:#ffffff;"></div>
<div class=a style="left:943.6px;top:204.4px;width:89.5px;height:16.2px;background:#ffffff;"></div>
<span class='t n' style="left:812.90px;top:206.59px;font-family:'Liberation Sans',sans-serif;font-size:10.6px;font-weight:400;color:#222;transform:scaleX(0.8914);">Thickness [um]</span>
<span class='t n' style="left:946.90px;top:207.49px;font-family:'Liberation Sans',sans-serif;font-size:10.6px;font-weight:400;color:#111;transform:scaleX(1.0159);">3</span>
<svg class=a style="left:1020.55px;top:211.3px;" width=6.5 height=3.8 viewBox="0 0 6.5 3.8"><path d='M0 0 H6.5 L3.25 3.8 Z' fill='#3a9cf0'/></svg>
<div class=a style="left:809.3px;top:222.20000000000002px;width:133.1px;height:16.2px;background:#ffffff;"></div>
<div class=a style="left:943.6px;top:222.20000000000002px;width:89.5px;height:16.2px;background:#ffffff;"></div>
<span class='t n' style="left:812.90px;top:224.39px;font-family:'Liberation Sans',sans-serif;font-size:10.6px;font-weight:400;color:#222;transform:scaleX(0.9370);">Substrate</span>
<span class='t n' style="left:946.90px;top:225.29px;font-family:'Liberation Sans',sans-serif;font-size:10.6px;font-weight:400;color:#111;transform:scaleX(0.8858);">Fill</span>
<svg class=a style="left:1020.55px;top:229.10000000000002px;" width=6.5 height=3.8 viewBox="0 0 6.5 3.8"><path d='M0 0 H6.5 L3.25 3.8 Z' fill='#e8202a'/></svg>
<div class=a style="left:809.3px;top:240.0px;width:133.1px;height:16.2px;background:#ffffff;"></div>
<div class=a style="left:943.6px;top:240.0px;width:89.5px;height:16.2px;background:#ffffff;"></div>
<span class='t n' style="left:812.90px;top:242.19px;font-family:'Liberation Sans',sans-serif;font-size:10.6px;font-weight:400;color:#222;transform:scaleX(0.9232);">Gap Position</span>
<span class='t n' style="left:946.90px;top:243.09px;font-family:'Liberation Sans',sans-serif;font-size:10.6px;font-weight:400;color:#111;transform:scaleX(0.9965);">No</span>
<svg class=a style="left:1020.55px;top:246.9px;" width=6.5 height=3.8 viewBox="0 0 6.5 3.8"><path d='M0 0 H6.5 L3.25 3.8 Z' fill='#e8202a'/></svg>
<div class=a style="left:809.3px;top:257.79999999999995px;width:133.1px;height:16.2px;background:#ffffff;"></div>
<div class=a style="left:943.6px;top:257.79999999999995px;width:89.5px;height:16.2px;background:#ffffff;"></div>
<span class='t n' style="left:812.90px;top:259.99px;font-family:'Liberation Sans',sans-serif;font-size:10.6px;font-weight:400;color:#222;transform:scaleX(0.9026);">Hardened</span>
<span class='t n' style="left:946.90px;top:260.89px;font-family:'Liberation Sans',sans-serif;font-size:10.6px;font-weight:400;color:#111;transform:scaleX(0.9965);">No</span>
<svg class=a style="left:1020.55px;top:264.7px;" width=6.5 height=3.8 viewBox="0 0 6.5 3.8"><path d='M0 0 H6.5 L3.25 3.8 Z' fill='#e8202a'/></svg>
<div class=a style="left:809.3px;top:275.59999999999997px;width:133.1px;height:16.2px;background:#ffffff;"></div>
<div class=a style="left:943.6px;top:275.59999999999997px;width:89.5px;height:16.2px;background:#ffffff;"></div>
<span class='t n' style="left:812.90px;top:277.79px;font-family:'Liberation Sans',sans-serif;font-size:10.6px;font-weight:400;color:#222;transform:scaleX(0.9293);">Dye Dopant</span>
<span class='t n' style="left:946.90px;top:278.69px;font-family:'Liberation Sans',sans-serif;font-size:10.6px;font-weight:400;color:#111;transform:scaleX(0.9965);">No</span>
<svg class=a style="left:1020.55px;top:282.5px;" width=6.5 height=3.8 viewBox="0 0 6.5 3.8"><path d='M0 0 H6.5 L3.25 3.8 Z' fill='#e8202a'/></svg>
<div class=a style="left:798px;top:296px;width:9px;height:9px;background:#fcfcfc;box-sizing:border-box;border:1px solid #8a8a8a;"></div>
<div class=a style="left:800px;top:300px;width:5px;height:1px;background:#222;"></div>
<span class='t' style="left:813.60px;top:294.84px;font-family:'Liberation Sans',sans-serif;font-size:11.6px;font-weight:700;color:#111;transform:scaleX(0.9200);">Mesh Condition</span>
<div class=a style="left:809.3px;top:311.2px;width:133.1px;height:16.2px;background:#ffffff;"></div>
<div class=a style="left:943.6px;top:311.2px;width:89.5px;height:16.2px;background:#ffffff;"></div>
<span class='t n' style="left:812.90px;top:313.39px;font-family:'Liberation Sans',sans-serif;font-size:10.6px;font-weight:400;color:#222;transform:scaleX(0.9385);">User Define</span>
<span class='t n' style="left:946.90px;top:314.29px;font-family:'Liberation Sans',sans-serif;font-size:10.6px;font-weight:400;color:#111;transform:scaleX(0.9965);">No</span>
<svg class=a style="left:1020.55px;top:318.1px;" width=6.5 height=3.8 viewBox="0 0 6.5 3.8"><path d='M0 0 H6.5 L3.25 3.8 Z' fill='#e8202a'/></svg>
<div class=a style="left:798px;top:331px;width:9px;height:9px;background:#fcfcfc;box-sizing:border-box;border:1px solid #8a8a8a;"></div>
<div class=a style="left:800px;top:335px;width:5px;height:1px;background:#222;"></div>
<span class='t' style="left:813.60px;top:330.44px;font-family:'Liberation Sans',sans-serif;font-size:11.6px;font-weight:700;color:#111;transform:scaleX(0.9536);">Surface Orientation</span>
<div class=a style="left:809.3px;top:346.79999999999995px;width:133.1px;height:16.2px;background:#0a78d4;"></div>
<div class=a style="left:943.6px;top:346.79999999999995px;width:89.5px;height:16.2px;background:#ffffff;"></div>
<span class='t n' style="left:812.90px;top:348.99px;font-family:'Liberation Sans',sans-serif;font-size:10.6px;font-weight:400;color:#ffffff;transform:scaleX(0.9261);">Rubbing Model</span>
<span class='t n' style="left:946.90px;top:349.89px;font-family:'Liberation Sans',sans-serif;font-size:10.6px;font-weight:400;color:#111;transform:scaleX(0.9442);">Planar Grating</span>
<svg class=a style="left:1020.55px;top:353.7px;" width=6.5 height=3.8 viewBox="0 0 6.5 3.8"><path d='M0 0 H6.5 L3.25 3.8 Z' fill='#e8202a'/></svg>
<div class=a style="left:809.3px;top:364.6px;width:133.1px;height:16.2px;background:#ffffff;"></div>
<div class=a style="left:943.6px;top:364.6px;width:89.5px;height:16.2px;background:#ffffff;"></div>
<span class='t n' style="left:812.90px;top:366.79px;font-family:'Liberation Sans',sans-serif;font-size:10.6px;font-weight:400;color:#222;transform:scaleX(0.9114);">T&amp;B:PreTilt</span>
<span class='t n' style="left:946.90px;top:367.69px;font-family:'Liberation Sans',sans-serif;font-size:10.6px;font-weight:400;color:#111;transform:scaleX(1.0159);">0</span>
<svg class=a style="left:1020.55px;top:371.50000000000006px;" width=6.5 height=3.8 viewBox="0 0 6.5 3.8"><path d='M0 0 H6.5 L3.25 3.8 Z' fill='#3a9cf0'/></svg>
<div class=a style="left:809.3px;top:382.4px;width:133.1px;height:16.2px;background:#ffffff;"></div>
<div class=a style="left:943.6px;top:382.4px;width:89.5px;height:16.2px;background:#ffffff;"></div>
<svg class=a style="left:813.5px;top:384.29999999999995px;" width=14 height=13 viewBox="0 0 14 13"><g fill='none' stroke='#9a9a9a' stroke-width='.8'><rect x='1' y='4.5' width='8' height='8'/><rect x='4.5' y='1' width='8' height='8'/><path d='M1 4.5 L4.5 1 M9 4.5 L12.5 1 M1 12.5 L4.5 9 M9 12.5 L12.5 9'/></g><path d='M1 4.5 L4.5 1 H12.5 L9 4.5 Z' fill='#f7c59a' stroke='#e88a40' stroke-width='.9'/></svg>
<span class='t n' style="left:832.90px;top:384.59px;font-family:'Liberation Sans',sans-serif;font-size:10.6px;font-weight:400;color:#222;transform:scaleX(0.9811);">T:Start Azimuthal [deg]</span>
<span class='t n' style="left:946.90px;top:385.49px;font-family:'Liberation Sans',sans-serif;font-size:10.6px;font-weight:400;color:#111;transform:scaleX(0.9222);">-2610</span>
<svg class=a style="left:1020.55px;top:389.3px;" width=6.5 height=3.8 viewBox="0 0 6.5 3.8"><path d='M0 0 H6.5 L3.25 3.8 Z' fill='#3a9cf0'/></svg>
<div class=a style="left:809.3px;top:400.2px;width:133.1px;height:16.2px;background:#ffffff;"></div>
<div class=a style="left:943.6px;top:400.2px;width:89.5px;height:16.2px;background:#ffffff;"></div>
<svg class=a style="left:813.5px;top:402.09999999999997px;" width=14 height=13 viewBox="0 0 14 13"><g fill='none' stroke='#9a9a9a' stroke-width='.8'><rect x='1' y='4.5' width='8' height='8'/><rect x='4.5' y='1' width='8' height='8'/><path d='M1 4.5 L4.5 1 M9 4.5 L12.5 1 M1 12.5 L4.5 9 M9 12.5 L12.5 9'/></g><path d='M1 12.5 L4.5 9 H12.5 L9 12.5 Z' fill='#f7c59a' stroke='#e88a40' stroke-width='.9'/></svg>
<span class='t n' style="left:832.90px;top:402.39px;font-family:'Liberation Sans',sans-serif;font-size:10.6px;font-weight:400;color:#222;transform:scaleX(0.9651);">B:Start Azimuthal [deg]</span>
<span class='t n' style="left:946.90px;top:403.29px;font-family:'Liberation Sans',sans-serif;font-size:10.6px;font-weight:400;color:#111;transform:scaleX(0.9325);">90</span>
<svg class=a style="left:1020.55px;top:407.1px;" width=6.5 height=3.8 viewBox="0 0 6.5 3.8"><path d='M0 0 H6.5 L3.25 3.8 Z' fill='#3a9cf0'/></svg>
<div class=a style="left:809.3px;top:418.0px;width:133.1px;height:16.2px;background:#ffffff;"></div>
<div class=a style="left:943.6px;top:418.0px;width:89.5px;height:16.2px;background:#ffffff;"></div>
<span class='t n' style="left:812.90px;top:420.19px;font-family:'Liberation Sans',sans-serif;font-size:10.6px;font-weight:400;color:#222;transform:scaleX(0.9307);">T&amp;B:Planar Pitch [um]</span>
<span class='t n' style="left:946.90px;top:421.09px;font-family:'Liberation Sans',sans-serif;font-size:10.6px;font-weight:400;color:#111;transform:scaleX(0.9935);">-1.76</span>
<svg class=a style="left:1020.55px;top:424.90000000000003px;" width=6.5 height=3.8 viewBox="0 0 6.5 3.8"><path d='M0 0 H6.5 L3.25 3.8 Z' fill='#3a9cf0'/></svg>
<div class=a style="left:798px;top:438px;width:9px;height:9px;background:#fcfcfc;box-sizing:border-box;border:1px solid #8a8a8a;"></div>
<div class=a style="left:800px;top:442px;width:5px;height:1px;background:#222;"></div>
<span class='t' style="left:813.60px;top:437.24px;font-family:'Liberation Sans',sans-serif;font-size:11.6px;font-weight:700;color:#111;transform:scaleX(0.9108);">Anchoring Condition</span>
<div class=a style="left:809.3px;top:453.6px;width:133.1px;height:16.2px;background:#ffffff;"></div>
<div class=a style="left:943.6px;top:453.6px;width:89.5px;height:16.2px;background:#ffffff;"></div>
<span class='t n' style="left:812.90px;top:455.79px;font-family:'Liberation Sans',sans-serif;font-size:10.6px;font-weight:400;color:#222;transform:scaleX(0.8685);">Fixed</span>
<span class='t n' style="left:946.90px;top:456.69px;font-family:'Liberation Sans',sans-serif;font-size:10.6px;font-weight:400;color:#111;transform:scaleX(0.9250);">Yes</span>
<svg class=a style="left:1020.55px;top:460.50000000000006px;" width=6.5 height=3.8 viewBox="0 0 6.5 3.8"><path d='M0 0 H6.5 L3.25 3.8 Z' fill='#3a9cf0'/></svg>
<div class=a style="left:798px;top:474px;width:9px;height:9px;background:#fcfcfc;box-sizing:border-box;border:1px solid #8a8a8a;"></div>
<div class=a style="left:800px;top:478px;width:5px;height:1px;background:#222;"></div>
<div class=a style="left:802px;top:476px;width:1px;height:5px;background:#222;"></div>
<span class='t' style="left:813.60px;top:472.84px;font-family:'Liberation Sans',sans-serif;font-size:11.6px;font-weight:700;color:#111;transform:scaleX(0.9482);">Mechanical Properties</span>
<div class=a style="left:798px;top:491px;width:9px;height:9px;background:#fcfcfc;box-sizing:border-box;border:1px solid #8a8a8a;"></div>
<div class=a style="left:800px;top:495px;width:5px;height:1px;background:#222;"></div>
<div class=a style="left:802px;top:493px;width:1px;height:5px;background:#222;"></div>
<span class='t' style="left:813.60px;top:490.64px;font-family:'Liberation Sans',sans-serif;font-size:11.6px;font-weight:700;color:#111;transform:scaleX(0.9399);">Electrical Properties</span>
<div class=a style="left:798px;top:509px;width:9px;height:9px;background:#fcfcfc;box-sizing:border-box;border:1px solid #8a8a8a;"></div>
<div class=a style="left:800px;top:513px;width:5px;height:1px;background:#222;"></div>
<div class=a style="left:802px;top:511px;width:1px;height:5px;background:#222;"></div>
<span class='t' style="left:813.60px;top:508.44px;font-family:'Liberation Sans',sans-serif;font-size:11.6px;font-weight:700;color:#111;transform:scaleX(0.9412);">Optical Properties</span>
<div class=a style="left:809.3px;top:525px;width:224.2px;height:100.5px;background:#ffffff;"></div>
<span class='t' style="left:798.00px;top:633.45px;font-family:'Liberation Sans',sans-serif;font-size:11px;font-weight:700;color:#111;transform:scaleX(0.9756);">Rubbing Model</span>
<svg class=a style="left:801.7px;top:359px;" width=236.0 height=80.60000000000002 viewBox="0 0 236.0 80.60000000000002"><path d='M3.00 3.00 H233.00 M3.00 77.60 H233.00' stroke='#f00a14' stroke-width='2.8' stroke-dasharray='8 3.4' fill='none'/><path d='M3.00 3.00 V77.60 M233.00 3.00 V77.60' stroke='#f00a14' stroke-width='2.8' stroke-dasharray='11.4 2.4' fill='none'/></svg>
<div class=a style="left:774.7px;top:354px;width:22.5px;height:30px;background:#ffffff;"></div>
<svg class=a style="left:774.3px;top:359.5px;" width=24 height=24 viewBox="0 0 24 24"><circle cx='12' cy='12' r='9.7' fill='#fff' stroke='#f00a14' stroke-width='1.9'/><text x='12.2' y='17.8' text-anchor='middle' font-family='Liberation Sans' font-weight='700' font-size='15.5' fill='#f00a14'>3</text></svg>
<div class=a style="left:1055.3px;top:228.9px;width:2.1px;height:279px;background:#111;"></div>
<div class=a style="left:1055.3px;top:228.9px;width:271px;height:1.7px;background:#111;"></div>
<div class=a style="left:1324.9px;top:228.9px;width:1.4px;height:279px;background:#222;"></div>
<div class=a style="left:1055.3px;top:505.8px;width:271px;height:2.1px;background:#080808;"></div>
<svg class=a style="left:1140px;top:240px;" width=160 height=150 viewBox="0 0 160 150"><path d='M62.00 7.20 V96.80 M150.10 7.20 V96.80' stroke='#7a7a7a' stroke-width='2' fill='none'/><path d='M26.50 43.50 L62.00 7.20 L150.10 7.20 L114.60 43.50 Z' fill='#f5caa8' stroke='#7a7a7a' stroke-width='2' /><path d='M26.50 133.10 L62.00 96.80 L150.10 96.80 L114.60 133.10 Z' fill='#f5caa8' stroke='#7a7a7a' stroke-width='2' /><path d='M26.50 43.50 V133.10 M114.60 43.50 V133.10' stroke='#7a7a7a' stroke-width='2' fill='none'/><path d='M150.10 7.20 V96.80' stroke='#7a7a7a' stroke-width='2' fill='none'/><path d='M26.50 43.50 H102.60' stroke='#111' stroke-width='2.2'/><path d='M101.60 38.00 L114.60 43.50 L101.60 49.00 Z' fill='#111'/><circle cx='26.50' cy='43.50' r='3.8' fill='#0a0af0'/><path d='M26.50 133.10 H102.60' stroke='#111' stroke-width='2.2'/><path d='M101.60 127.60 L114.60 133.10 L101.60 138.60 Z' fill='#111'/><circle cx='26.50' cy='133.10' r='3.8' fill='#0a0af0'/><path d='M16.50 42.80 H10.60 V133.00 H16.50 M10.60 87.60 H6.00' stroke='#2a2ae0' stroke-width='1.3' fill='none'/></svg>
<span class='t' style="left:1171.00px;top:263.58px;font-family:'Liberation Sans',sans-serif;font-size:13.2px;font-weight:700;color:#111;transform:scaleX(0.9838);">Planar Pitch</span>
<span class='t' style="left:1171.00px;top:382.98px;font-family:'Liberation Sans',sans-serif;font-size:13.2px;font-weight:700;color:#111;transform:scaleX(0.9838);">Planar Pitch</span>
<span class='t' style="left:1077.40px;top:320.58px;font-family:'Liberation Sans',sans-serif;font-size:13.2px;font-weight:700;color:#1515e8;transform:scaleX(1.0289);">Start Point</span>
<svg class=a style="left:1123.7px;top:432.2px;" width=189 height=29 viewBox="0 0 189 29"><rect x='0.5' y='0.5' width='188' height='27.5' fill='#f5caa8' stroke='#9a9a9a' stroke-width='1'/><g transform='translate(19.60 15.20) rotate(0)'><rect x='-8.5' y='-2.3' width='8.5' height='4.6' fill='#ee1111'/><rect x='0' y='-2.3' width='8.5' height='4.6' fill='#ffffff'/></g><g transform='translate(40.00 15.20) rotate(45)'><rect x='-8.5' y='-2.3' width='8.5' height='4.6' fill='#ee1111'/><rect x='0' y='-2.3' width='8.5' height='4.6' fill='#ffffff'/></g><g transform='translate(57.20 15.20) rotate(90)'><rect x='-8.5' y='-2.3' width='8.5' height='4.6' fill='#ee1111'/><rect x='0' y='-2.3' width='8.5' height='4.6' fill='#ffffff'/></g><g transform='translate(75.70 15.20) rotate(135)'><rect x='-8.5' y='-2.3' width='8.5' height='4.6' fill='#ee1111'/><rect x='0' y='-2.3' width='8.5' height='4.6' fill='#ffffff'/></g><g transform='translate(94.90 15.20) rotate(180)'><rect x='-8.5' y='-2.3' width='8.5' height='4.6' fill='#ee1111'/><rect x='0' y='-2.3' width='8.5' height='4.6' fill='#ffffff'/></g><g transform='translate(114.90 15.20) rotate(225)'><rect x='-8.5' y='-2.3' width='8.5' height='4.6' fill='#ee1111'/><rect x='0' y='-2.3' width='8.5' height='4.6' fill='#ffffff'/></g><g transform='translate(132.00 15.20) rotate(270)'><rect x='-8.5' y='-2.3' width='8.5' height='4.6' fill='#ee1111'/><rect x='0' y='-2.3' width='8.5' height='4.6' fill='#ffffff'/></g><g transform='translate(149.30 15.20) rotate(315)'><rect x='-8.5' y='-2.3' width='8.5' height='4.6' fill='#ee1111'/><rect x='0' y='-2.3' width='8.5' height='4.6' fill='#ffffff'/></g><g transform='translate(170.00 15.20) rotate(0)'><rect x='-8.5' y='-2.3' width='8.5' height='4.6' fill='#ee1111'/><rect x='0' y='-2.3' width='8.5' height='4.6' fill='#ffffff'/></g></svg>
<svg class=a style="left:1118px;top:452px;" width=200 height=32 viewBox="0 0 200 32"><circle cx='6.5' cy='7.6' r='3.4' fill='#0a0af0'/><path d='M6 22.7 H194.3 M6 16 V29 M194.3 16 V29' stroke='#333' stroke-width='1.5'/></svg>
<span class='t' style="left:1063.70px;top:452.89px;font-family:'Liberation Sans',sans-serif;font-size:10.6px;font-weight:700;color:#222;transform:scaleX(0.9615);">Start Point</span>
<span class='t' style="left:1193.60px;top:478.99px;font-family:'Liberation Sans',sans-serif;font-size:10.6px;font-weight:700;color:#222;transform:scaleX(0.9576);">Pitch (um)</span>
</body></html>
